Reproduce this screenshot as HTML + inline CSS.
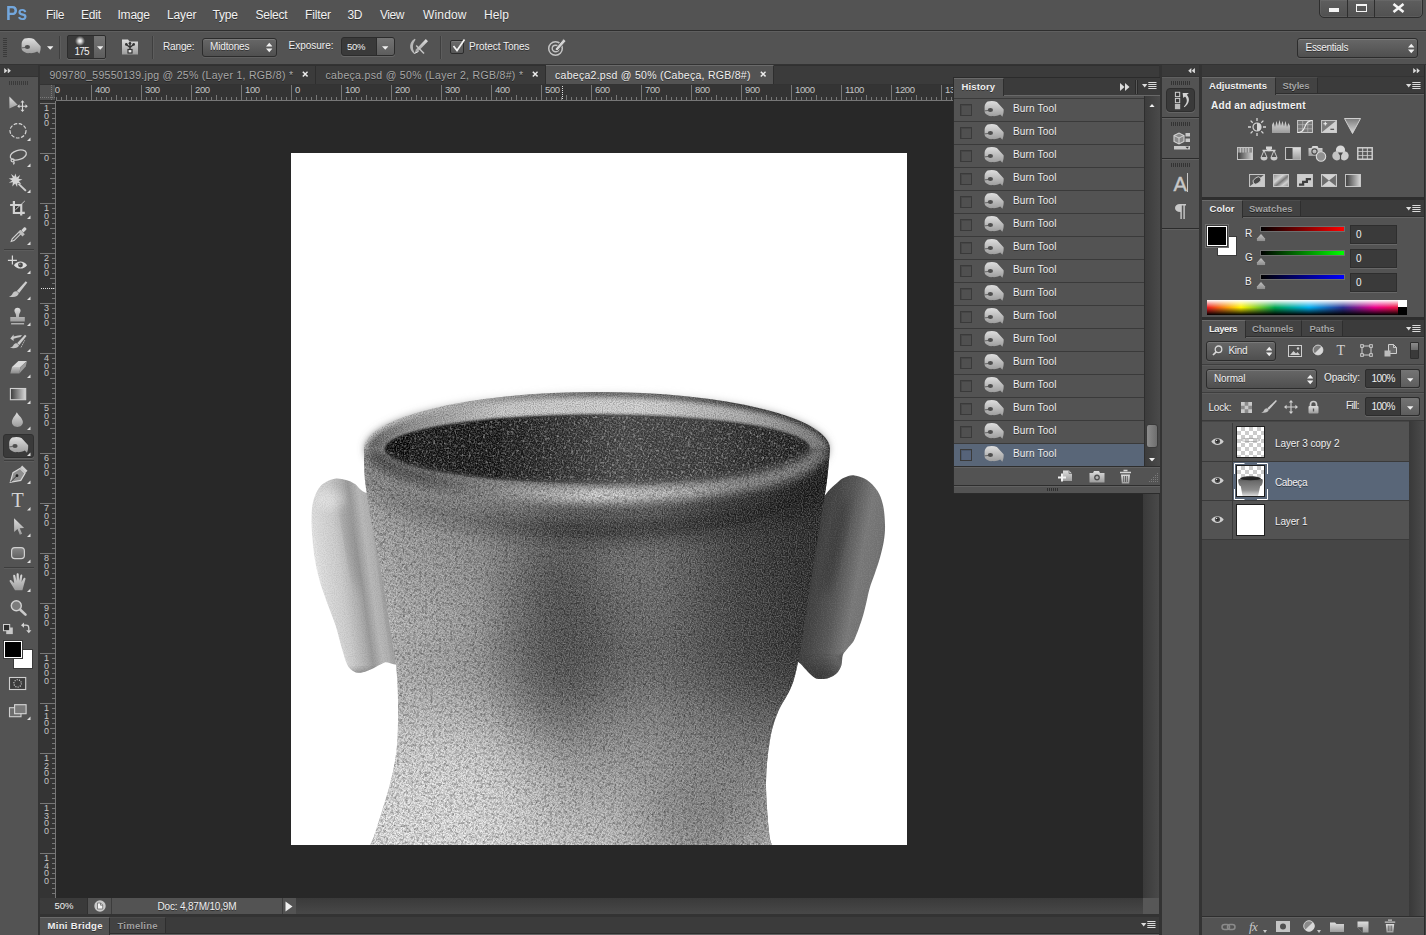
<!DOCTYPE html>
<html lang="en"><head><meta charset="utf-8"><title>Adobe Photoshop CS6 - cabeça2.psd</title>
<style>
html,body{margin:0;padding:0;background:#535353;}
body{width:1426px;height:935px;overflow:hidden;font-family:"Liberation Sans",sans-serif;}
#app{position:relative;width:1426px;height:935px;overflow:hidden;background:#535353;}
#app div,#app span.t,#app svg{position:absolute;box-sizing:border-box;}
span.t{white-space:nowrap;display:block;}

</style></head>
<body>
<div id="app">
<div style="left:0px;top:30px;width:1426px;height:1px;background:#2e2e2e;"></div>
<div style="left:0px;top:31px;width:1426px;height:1px;background:#5f5f5f;"></div>
<div style="left:0px;top:64px;width:1426px;height:1px;background:#333333;"></div>
<div style="left:0px;top:65px;width:38px;height:11px;background:#3a3a3a;"></div>
<div style="left:0px;top:76px;width:38px;height:1px;background:#333333;"></div>
<div style="left:38px;top:65px;width:2px;height:870px;background:#333333;"></div>
<div style="left:40px;top:65px;width:1119px;height:19px;background:#3b3b3b;"></div>
<div style="left:40px;top:84px;width:1119px;height:1px;background:#333333;"></div>
<div style="left:40px;top:85px;width:1104px;height:16px;background:#343434;"></div>
<div style="left:40px;top:101px;width:16px;height:797px;background:#343434;"></div>
<div style="left:40px;top:85px;width:15px;height:15px;background:#4f4f4f;"></div>
<div style="left:55px;top:85px;width:1px;height:16px;background:#2e2e2e;"></div>
<div style="left:40px;top:100px;width:16px;height:1px;background:#2e2e2e;"></div>
<div style="left:56px;top:101px;width:1087px;height:797px;background:#282828;"></div>
<div style="left:1143px;top:85px;width:16px;height:813px;background:linear-gradient(90deg,#3a3a3a,#494949);"></div>
<div style="left:40px;top:898px;width:1119px;height:16px;background:#3a3a3a;"></div>
<div style="left:40px;top:914px;width:1119px;height:3px;background:#333333;"></div>
<div style="left:1159px;top:65px;width:3px;height:870px;background:#333333;"></div>
<div style="left:1199px;top:65px;width:3px;height:870px;background:#333333;"></div>
<div style="left:1162px;top:65px;width:37px;height:11px;background:#3a3a3a;"></div>
<div style="left:1162px;top:76px;width:37px;height:1px;background:#333333;"></div>
<div style="left:1202px;top:65px;width:224px;height:11px;background:#3a3a3a;"></div>
<div style="left:1202px;top:76px;width:224px;height:1px;background:#333333;"></div>
<svg width="0" height="0" style="left:0;top:0"><defs>
<linearGradient id="gIcon" x1="0" y1="0" x2="0" y2="1"><stop offset="0" stop-color="#dedede"/><stop offset="1" stop-color="#9c9c9c"/></linearGradient>
<linearGradient id="gIconD" x1="0" y1="0" x2="0" y2="1"><stop offset="0" stop-color="#c4c4c4"/><stop offset="1" stop-color="#8a8a8a"/></linearGradient>
<symbol id="burn" viewBox="0 0 20 16"><path d="M3.600 .6C6.500-.3 10.200-.2 12.900 1L19.600 8.300C19.900 11 19.200 13.600 18.400 15.800L16.200 13.600C13.600 15 10.600 15.400 8.500 15.100 6.600 15.300 5 15 3.900 14.300 2 13.300.8 12 .6 10.400V5.800C.8 3.600 1.800 1.600 3.600 .6z" fill="url(#gIcon)"/><ellipse cx="6.400" cy="9" rx="2.600" ry="2.100" fill="#4e4e4e"/><path d="M.6 9.900L4.200 9.500" stroke="#5a5a5a" stroke-width=".9"/></symbol>
<symbol id="pmenu" viewBox="0 0 15 8"><path d="M0 2h5.400L2.700 5.600z" fill="#dcdcdc"/><path d="M6.300 .5h8.200M6.300 2.500h8.200M6.300 4.500h8.200M6.300 6.500h8.200" stroke="#dcdcdc" stroke-width="1"/></symbol>
<symbol id="updown" viewBox="0 0 7 11"><path d="M0 4.500L3.500.5 7 4.500zM0 6.500L3.500 10.500 7 6.500z" fill="#f0f0f0"/></symbol>
<symbol id="dn" viewBox="0 0 7 4"><path d="M0 0h7L3.500 4z" fill="#f0f0f0"/></symbol>
</defs></svg>
<span id="t0" class="t" style="left:6px;top:3px;font-size:20px;line-height:20px;height:20px;color:#73a7dd;font-weight:bold;transform:scaleX(.87);transform-origin:0 0;">Ps</span>
<span id="t1" class="t" style="left:46px;top:9px;font-size:12px;line-height:12px;height:12px;color:#f2f2f2;text-shadow:0 1px 0 rgba(0,0,0,.45);letter-spacing:-0.281px;">File</span>
<span id="t2" class="t" style="left:81px;top:9px;font-size:12px;line-height:12px;height:12px;color:#f2f2f2;text-shadow:0 1px 0 rgba(0,0,0,.45);letter-spacing:-0.229px;">Edit</span>
<span id="t3" class="t" style="left:117.5px;top:9px;font-size:12px;line-height:12px;height:12px;color:#f2f2f2;text-shadow:0 1px 0 rgba(0,0,0,.45);letter-spacing:-0.215px;">Image</span>
<span id="t4" class="t" style="left:167px;top:9px;font-size:12px;line-height:12px;height:12px;color:#f2f2f2;text-shadow:0 1px 0 rgba(0,0,0,.45);letter-spacing:-0.133px;">Layer</span>
<span id="t5" class="t" style="left:212.5px;top:9px;font-size:12px;line-height:12px;height:12px;color:#f2f2f2;text-shadow:0 1px 0 rgba(0,0,0,.45);letter-spacing:-0.172px;">Type</span>
<span id="t6" class="t" style="left:255.5px;top:9px;font-size:12px;line-height:12px;height:12px;color:#f2f2f2;text-shadow:0 1px 0 rgba(0,0,0,.45);letter-spacing:-0.272px;">Select</span>
<span id="t7" class="t" style="left:305px;top:9px;font-size:12px;line-height:12px;height:12px;color:#f2f2f2;text-shadow:0 1px 0 rgba(0,0,0,.45);letter-spacing:-0.134px;">Filter</span>
<span id="t8" class="t" style="left:347.5px;top:9px;font-size:12px;line-height:12px;height:12px;color:#f2f2f2;text-shadow:0 1px 0 rgba(0,0,0,.45);letter-spacing:-0.344px;">3D</span>
<span id="t9" class="t" style="left:380px;top:9px;font-size:12px;line-height:12px;height:12px;color:#f2f2f2;text-shadow:0 1px 0 rgba(0,0,0,.45);letter-spacing:-0.432px;">View</span>
<span id="t10" class="t" style="left:423px;top:9px;font-size:12px;line-height:12px;height:12px;color:#f2f2f2;text-shadow:0 1px 0 rgba(0,0,0,.45);letter-spacing:0.163px;">Window</span>
<span id="t11" class="t" style="left:484px;top:9px;font-size:12px;line-height:12px;height:12px;color:#f2f2f2;text-shadow:0 1px 0 rgba(0,0,0,.45);letter-spacing:0.104px;">Help</span>
<div style="left:1319px;top:-1px;width:104px;height:19px;border:1px solid #2e2e2e;border-radius:0 0 5px 5px;background:linear-gradient(#5e5e5e,#515151);box-shadow:inset 0 0 0 1px rgba(255,255,255,.06)"></div>
<div style="left:1347px;top:0px;width:1px;height:17px;background:#2e2e2e;"></div>
<div style="left:1374px;top:0px;width:1px;height:17px;background:#2e2e2e;"></div>
<div style="left:1329px;top:8px;width:10px;height:4px;background:#f4f4f4;"></div>
<div style="left:1356px;top:4px;width:11px;height:8px;border:1.500px solid #f4f4f4;border-top-width:2.500px"></div>
<svg style="left:1392px;top:3px" width="13" height="10" viewBox="0 0 13 10"><path d="M1.500 1L11.500 9M11.500 1L1.500 9" stroke="#f4f4f4" stroke-width="2.600"/></svg>
<div style="left:3px;top:38px;width:4px;height:20px;background:repeating-linear-gradient(#3a3a3a 0 1px,transparent 1px 2px)"></div>
<svg style="left:20.500px;top:38.300px" width="20" height="16"><use href="#burn"/></svg>
<svg style="left:47px;top:45.500px" width="6.500" height="4"><use href="#dn"/></svg>
<div style="left:59px;top:36px;width:1px;height:23px;background:#3f3f3f;"></div>
<div style="left:60px;top:36px;width:1px;height:23px;background:#5d5d5d;"></div>
<div style="left:67px;top:35px;width:39px;height:24px;border:1px solid #2c2c2c;border-radius:2px;background:#3a3a3a;box-shadow:0 1px 0 rgba(255,255,255,.12)"></div>
<div style="left:94px;top:36px;width:11px;height:22px;border-radius:0 1px 1px 0;background:linear-gradient(#747474,#5d5d5d)"></div>
<div style="left:75px;top:36px;width:10px;height:10px;border-radius:50%;background:radial-gradient(circle,#fff 0,#cfcfcf 25%,rgba(120,120,120,.5) 60%,rgba(58,58,58,0) 75%)"></div>
<span id="t12" class="t" style="left:74.5px;top:47px;font-size:10px;line-height:10px;height:10px;color:#f0f0f0;letter-spacing:-0.844px;">175</span>
<svg style="left:96.500px;top:45.500px" width="6.500" height="4"><use href="#dn"/></svg>
<svg style="left:121px;top:37px" width="18" height="19" viewBox="0 0 18 19"><path d="M1 2.500h6l1.500 2H17v13H1z" fill="url(#gIcon)"/><path d="M9 15.500v-5M9 10.500L5.500 7.500M9 10.500l3.500-3M9 10.500V6.500" stroke="#333" stroke-width="1.400" fill="none"/><rect x="7" y="12.500" width="4" height="3.500" fill="#f0f0f0" stroke="#333" stroke-width="1.200"/><circle cx="5.300" cy="7.400" r="1.300" fill="#333"/><circle cx="12.700" cy="7.400" r="1.300" fill="#333"/><circle cx="9" cy="6.200" r="1.300" fill="#333"/></svg>
<div style="left:152px;top:36px;width:1px;height:23px;background:#3f3f3f;"></div>
<div style="left:153px;top:36px;width:1px;height:23px;background:#5d5d5d;"></div>
<span id="t13" class="t" style="left:163px;top:42px;font-size:10px;line-height:10px;height:10px;color:#f0f0f0;text-shadow:0 1px 0 rgba(0,0,0,.45);letter-spacing:-0.150px;">Range:</span>
<div style="left:202px;top:38px;width:75px;height:19px;border:1px solid #2c2c2c;border-radius:3px;background:linear-gradient(#676767,#4f4f4f);box-shadow:inset 0 1px 0 rgba(255,255,255,.13),0 1px 0 rgba(255,255,255,.08)"></div>
<span id="t14" class="t" style="left:210px;top:42px;font-size:10px;line-height:10px;height:10px;color:#f0f0f0;text-shadow:0 1px 0 rgba(0,0,0,.45);letter-spacing:-0.154px;">Midtones</span>
<svg style="left:266px;top:42px" width="6.500" height="11"><use href="#updown"/></svg>
<span id="t15" class="t" style="left:288.5px;top:41px;font-size:10px;line-height:10px;height:10px;color:#f0f0f0;text-shadow:0 1px 0 rgba(0,0,0,.45);letter-spacing:-0.004px;">Exposure:</span>
<div style="left:341px;top:37px;width:54px;height:19px;border:1px solid #2c2c2c;border-radius:3px;background:#3a3a3a;box-shadow:0 1px 0 rgba(255,255,255,.12)"></div>
<div style="left:376px;top:38px;width:18px;height:17px;border-radius:0 2px 2px 0;background:linear-gradient(#747474,#5d5d5d);border-left:1px solid #2c2c2c"></div>
<span id="t16" class="t" style="left:347px;top:42px;font-size:9.5px;line-height:10px;height:10px;color:#f0f0f0;letter-spacing:-0.258px;">50%</span>
<svg style="left:382px;top:45.500px" width="6.500" height="4"><use href="#dn"/></svg>
<svg style="left:408px;top:38px" width="21" height="17" viewBox="0 0 21 17"><path d="M6.800 1.500C1.800 4.500 1.500 11 5.800 14.800 3.600 10.800 3.800 5.500 6.800 1.500z" fill="#b8b8b8" stroke="#b8b8b8" stroke-width="1.300" stroke-linejoin="round"/><path d="M17.800 1l2.200 2.200-9.700 10-4 2.300 1.800-4.300z" fill="url(#gIcon)"/><path d="M8.200 7.500l7.800 8" stroke="#c4c4c4" stroke-width="1.500"/><path d="M10.500 13.500l-4.200 2" stroke="#e8e8e8" stroke-width="1"/></svg>
<div style="left:440px;top:36px;width:1px;height:23px;background:#3f3f3f;"></div>
<div style="left:441px;top:36px;width:1px;height:23px;background:#5d5d5d;"></div>
<div style="left:450px;top:40px;width:14px;height:14px;border:1px solid #2c2c2c;border-radius:2px;background:linear-gradient(#6a6a6a,#565656);box-shadow:inset 0 1px 0 rgba(255,255,255,.1)"></div>
<svg style="left:451px;top:38px" width="15" height="15" viewBox="0 0 15 15"><path d="M2.500 8l3.500 4.500L13.500 1.500" stroke="#f2f2f2" stroke-width="1.700" fill="none"/></svg>
<span id="t17" class="t" style="left:469px;top:42px;font-size:10px;line-height:10px;height:10px;color:#f0f0f0;text-shadow:0 1px 0 rgba(0,0,0,.45);letter-spacing:-0.039px;">Protect Tones</span>
<svg style="left:547px;top:37px" width="20" height="20" viewBox="0 0 20 20"><circle cx="8.500" cy="11.500" r="6.800" stroke="#c4c4c4" stroke-width="1.500" fill="none"/><circle cx="8.500" cy="11.500" r="3.300" stroke="#c4c4c4" stroke-width="1.400" fill="none"/><path d="M7.800 12.200l8.700-10.400 2.600 2.300L10.200 14z" fill="#d4d4d4" stroke="#535353" stroke-width=".9"/></svg>
<div style="left:1297px;top:38px;width:121px;height:20px;border:1px solid #2c2c2c;border-radius:3px;background:linear-gradient(#676767,#4f4f4f);box-shadow:inset 0 1px 0 rgba(255,255,255,.13),0 1px 0 rgba(255,255,255,.08)"></div>
<span id="t18" class="t" style="left:1305.5px;top:43px;font-size:10px;line-height:10px;height:10px;color:#f0f0f0;text-shadow:0 1px 0 rgba(0,0,0,.45);letter-spacing:-0.286px;">Essentials</span>
<svg style="left:1408px;top:42.500px" width="6.500" height="11"><use href="#updown"/></svg>
<svg style="left:4px;top:67.800px" width="7.500" height="5.500" viewBox="0 0 9 7"><path d="M0 0l4 3.500L0 7zM4.500 0l4 3.500-4 3.500z" fill="#dcdcdc"/></svg>
<div style="left:9px;top:81px;width:19px;height:4px;background:repeating-linear-gradient(90deg,#3a3a3a 0 1px,transparent 1px 2px)"></div>
<div style="left:4px;top:249px;width:30px;height:1px;background:#3d3d3d;"></div>
<div style="left:4px;top:250px;width:30px;height:1px;background:#5c5c5c;"></div>
<div style="left:4px;top:460px;width:30px;height:1px;background:#3d3d3d;"></div>
<div style="left:4px;top:461px;width:30px;height:1px;background:#5c5c5c;"></div>
<div style="left:4px;top:567px;width:30px;height:1px;background:#3d3d3d;"></div>
<div style="left:4px;top:568px;width:30px;height:1px;background:#5c5c5c;"></div>
<div style="left:3px;top:434px;width:31px;height:24px;border-radius:3px;background:#3a3a3a;border:1px solid #303030;box-shadow:0 1px 0 rgba(255,255,255,.10)"></div>
<svg style="left:0;top:77px" width="38" height="660" viewBox="0 77 38 660">
<g fill="#e0e0e0"><path d="M30.500 137.5V141H27z"/><path d="M30.500 163.5V167H27z"/><path d="M30.500 189.5V193H27z"/><path d="M30.500 215.5V219H27z"/><path d="M30.500 241.5V245H27z"/><path d="M30.500 270.5V274H27z"/><path d="M30.500 296.5V300H27z"/><path d="M30.500 322.5V326H27z"/><path d="M30.500 348.5V352H27z"/><path d="M30.500 374.5V378H27z"/><path d="M30.500 400.5V404H27z"/><path d="M30.500 426.5V430H27z"/><path d="M30.500 452.5V456H27z"/><path d="M30.500 480.5V484H27z"/><path d="M30.500 507.0V510.5H27z"/><path d="M30.500 533.5V537H27z"/><path d="M30.500 559.5V563H27z"/><path d="M30.500 588.5V592H27z"/><path d="M30.500 716.5V720H27z"/></g>
<!-- move -->
<path d="M9.400 96.600V108.600L17.600 104.700z" fill="url(#gIcon)"/>
<path d="M18.300 106.200h8.400M22.500 101.400v9.600" stroke="#d8d8d8" stroke-width="1.100"/>
<path d="M22.500 100.300l-2 2.300h4zM22.500 112.100l-2-2.300h4zM17.200 106.200l2.300-2v4zM27.800 106.200l-2.300-2v4z" fill="#d8d8d8"/>
<!-- elliptical marquee -->
<ellipse cx="18" cy="130.800" rx="8" ry="7.200" fill="none" stroke="#d8d8d8" stroke-width="1.200" stroke-dasharray="3.600 1.600"/>
<!-- lasso -->
<g fill="none" stroke="#cfcfcf" stroke-width="1.300"><ellipse cx="18.300" cy="155" rx="8.300" ry="4.700" transform="rotate(-17 18.300 155)"/><circle cx="12.600" cy="160.300" r="1.500"/><path d="M13.400 161.600c1.200 1 .9 2.200-.3 2.600"/></g>
<!-- magic wand -->
<path d="M15.400 173.600l1.300 3.800 3.400-2.400-1.600 3.800 4 .6-3.700 1.700 2.500 3-3.800-1.200-.4 4-2-3.500-2.800 3 .600-4.100-4.100.5 3.400-2.400-3.500-2 4.100-.5-1.700-3.800 3.300 2.400z" fill="#d4d4d4"/>
<path d="M18.600 183.900l7.300 7" stroke="#cfcfcf" stroke-width="2"/>
<!-- crop -->
<path d="M13.900 201v11.900h10.900M10.100 205h11.100v10.500" fill="none" stroke="#d2d2d2" stroke-width="2.200"/>
<rect x="15" y="206.100" width="5.100" height="5.700" fill="#3c3c3c"/>
<path d="M24.800 201l-9.400 8.800" stroke="#d2d2d2" stroke-width=".9"/>
<!-- eyedropper -->
<path d="M11.200 241.500l1-2.700 8-8 1.800 1.800-8 8z" fill="#5a5a5a" stroke="#d2d2d2" stroke-width="1.100"/>
<path d="M18.300 232.300l2.300-2.300 4.200 4.200-2.300 2.300z" fill="#bdbdbd"/>
<path d="M21.300 230.300l2.600-2.800c1.200-1.100 3.400 1 2.300 2.300l-2.800 2.700z" fill="#d6d6d6"/>
<!-- spot healing -->
<path d="M12.400 255.500v9M7.900 260.400h9" stroke="#dadada" stroke-width="1.200"/>
<path d="M13.900 265.200c3.500-5 9.700-5 13.200 0-3.500 4.500-9.700 4.500-13.200 0z" fill="#dcdcdc"/>
<circle cx="20.500" cy="265" r="2.400" fill="#484848"/><circle cx="19.800" cy="264.200" r=".8" fill="#999"/>
<!-- brush -->
<path d="M25.700 281.300l1.600 1.300-8.200 10.300-2.300-1.800z" fill="#cdcdcd"/>
<path d="M16.600 291.300l2.200 1.900c-.5 3.300-5 4.800-9.900 3.200 2.500-.5 3-1.600 3.700-3 1-1.800 2.500-2.400 4-2.100z" fill="#c4c4c4"/>
<!-- clone stamp -->
<path d="M17.500 307.800c1.800 0 3.100 1.300 3.100 3 0 1.600-1.300 2.400-1.500 3.900l-.2 2.300h5.900v4.600H10.300V317h5.800l-.2-2.300c-.2-1.500-1.500-2.300-1.500-3.900 0-1.700 1.300-3 3.100-3z" fill="url(#gIcon)"/>
<path d="M11.100 323.800h13" stroke="#cfcfcf" stroke-width="1.100"/>
<!-- history brush -->
<path d="M25 334.800l1.500 1.200-7.200 8.900-2.200-1.700z" fill="#cdcdcd"/>
<path d="M16.900 343.400l2.100 1.800c-.5 2.600-4.400 3.600-9.100 2.600 2.300-.5 2.800-1.400 3.500-2.500.9-1.500 2.200-2.100 3.500-1.900z" fill="#c4c4c4"/>
<path d="M10.300 338.600l3.300-4v1.900c3-.9 6-1.300 8.400-1.500l-1.500 1.900c-2.300.3-4.700.9-6.900 1.800v2.300z" fill="#c9c9c9"/>
<path d="M24.600 340.500l-3.600 7" stroke="#e0e0e0" stroke-width="1" stroke-dasharray="1 1.200"/>
<!-- eraser -->
<path d="M18.400 361H27l-6.500 6H12z" fill="#dadada"/>
<path d="M12 367h8.500l-1.200 6.400h-9z" fill="url(#gIconD)"/>
<path d="M20.500 367l6.500-6-1.300 5.500-6.400 6.900z" fill="#9a9a9a"/>
<!-- gradient -->
<linearGradient id="gGrad" x1="0" y1="0" x2="1" y2="0"><stop offset="0" stop-color="#3a3a3a"/><stop offset="1" stop-color="#d8d8d8"/></linearGradient>
<rect x="10.400" y="388.500" width="15.300" height="11.200" fill="url(#gGrad)" stroke="#d0d0d0" stroke-width="1.100"/>
<!-- blur -->
<path d="M16.800 412.200c1.300 2.800 6.100 6.200 6.100 9.800 0 3-2.400 4.900-5.500 4.900s-5.500-1.900-5.500-4.900c0-3.600 3.900-7 4.900-9.800z" fill="url(#gIcon)"/>
<!-- burn (selected) -->
<use href="#burn" x="8.600" y="437" width="20" height="16"/>
<!-- pen -->
<path d="M10.300 482.300l2.700-9.600 7-4.300 5 5-4.200 7z" fill="#8e8e8e" stroke="#d8d8d8" stroke-width="1.200"/>
<path d="M10.600 482l6-6" stroke="#3a3a3a" stroke-width="1"/><circle cx="17" cy="475.700" r="1.400" fill="#222"/>
<path d="M20.200 467.700l2-2.200 5.300 5.300-2 2.200z" fill="#cfcfcf"/>
<!-- path selection -->
<path d="M14.100 518.300v13.800l3.400-3.200 2.300 5.800 2.300-.9-2.400-5.600 4.400-.3z" fill="url(#gIcon)"/>
<!-- rounded rectangle -->
<linearGradient id="gShape" x1="0" y1="0" x2="0" y2="1"><stop offset="0" stop-color="#868686"/><stop offset="1" stop-color="#626262"/></linearGradient>
<rect x="11.600" y="547.600" width="12.800" height="11" rx="3.300" fill="url(#gShape)" stroke="#d0d0d0" stroke-width="1.200"/>
<!-- hand -->
<path d="M15 590.200l-5.300-8.600c-.6-1.200.8-2.100 1.800-1.100l2.700 2.700-1-7.200c-.2-1.400 1.600-1.700 2-.4l1.300 5.300.1-6.600c0-1.400 2-1.400 2.100 0l.4 6.500 1.300-5.600c.3-1.300 2.100-.9 1.900.4l-.8 6.500 2.100-3.800c.7-1.200 2.300-.4 1.800.9l-3 11z" fill="url(#gIcon)"/>
<!-- zoom -->
<circle cx="16.300" cy="605.700" r="5" fill="#7c7c7c" stroke="#d2d2d2" stroke-width="1.400"/>
<path d="M20.300 609.700l5.200 4.900" stroke="#cacaca" stroke-width="2.600" stroke-linecap="round"/>
<!-- default colors / swap -->
<rect x="6.200" y="627.500" width="6.600" height="6.600" fill="#c8c8c8"/>
<rect x="3.500" y="624.500" width="6.200" height="6.200" fill="#2e2e2e" stroke="#d0d0d0" stroke-width="1"/>
<path d="M23.300 625.200h2.700c1.800 0 2.800 1 2.800 2.800v2.500" fill="none" stroke="#d4d4d4" stroke-width="1.300"/>
<path d="M21 625.200l3-2.600v5.200zM28.800 633.200l-2.600-3h5.200z" fill="#d4d4d4"/>
<!-- fg / bg swatches -->
<rect x="13.500" y="649.500" width="19" height="19" fill="#fff" stroke="#3a3a3a" stroke-width="1"/>
<rect x="3.500" y="640.500" width="19" height="18" fill="#000" stroke="#3a3a3a" stroke-width="1"/>
<rect x="4.500" y="641.500" width="17" height="16" fill="#000" stroke="#fff" stroke-width="1"/>
<!-- quick mask -->
<rect x="9.500" y="677.500" width="16.200" height="12" fill="#3c3c3c" stroke="#cfcfcf" stroke-width="1.100"/>
<circle cx="17.600" cy="683.400" r="3.700" fill="none" stroke="#e6e6e6" stroke-width="1.100" stroke-dasharray="1 1.300"/>
<!-- screen mode -->
<rect x="9.500" y="707.700" width="11.500" height="9" fill="#6e6e6e" stroke="#cfcfcf" stroke-width="1.100"/>
<rect x="14.600" y="704.700" width="11.500" height="9" fill="#7a7a7a" stroke="#d6d6d6" stroke-width="1.100"/>
</svg>
<span id="t19" class="t" style="left:11.5px;top:490px;font-size:20px;line-height:20px;height:20px;color:#d4d4d4;font-family:'Liberation Serif',serif;">T</span>
<div style="left:315px;top:65px;width:1px;height:19px;background:#2e2e2e;"></div>
<div style="left:545px;top:65px;width:1px;height:19px;background:#2e2e2e;"></div>
<div style="left:40px;top:65px;width:1119px;height:1px;background:#303030;"></div>
<div style="left:546px;top:65px;width:228px;height:19px;background:#535353;border-top:1px solid #6a6a6a;border-right:1px solid #2e2e2e"></div>
<span id="t20" class="t" style="left:49.5px;top:70px;font-size:10.5px;line-height:11px;height:11px;color:#a8a8a8;text-shadow:0 1px 0 rgba(0,0,0,.5);letter-spacing:0.283px;">909780_59550139.jpg @ 25% (Layer 1, RGB/8) *</span>
<span id="t21" class="t" style="left:325.5px;top:70px;font-size:10.5px;line-height:11px;height:11px;color:#a8a8a8;text-shadow:0 1px 0 rgba(0,0,0,.5);letter-spacing:0.319px;">cabeça.psd @ 50% (Layer 2, RGB/8#) *</span>
<span id="t22" class="t" style="left:555px;top:70px;font-size:10.5px;line-height:11px;height:11px;color:#f0f0f0;text-shadow:0 1px 0 rgba(0,0,0,.45);letter-spacing:0.277px;">cabeça2.psd @ 50% (Cabeça, RGB/8#)</span>
<svg style="left:301.8px;top:71px" width="6.400" height="6.200" viewBox="0 0 7 7"><path d="M.8.8l5.400 5.400M6.200.8L.8 6.200" stroke="#ececec" stroke-width="1.700"/></svg>
<svg style="left:531.8px;top:71px" width="6.400" height="6.200" viewBox="0 0 7 7"><path d="M.8.8l5.400 5.400M6.200.8L.8 6.200" stroke="#ececec" stroke-width="1.700"/></svg>
<svg style="left:759.8px;top:71px" width="6.400" height="6.200" viewBox="0 0 7 7"><path d="M.8.8l5.400 5.400M6.200.8L.8 6.200" stroke="#ececec" stroke-width="1.700"/></svg>
<svg style="left:0;top:0" width="1160" height="101" viewBox="0 0 1160 101"><path d="M56.5 97V100M61.5 97V100M66.5 95V100M71.5 97V100M76.5 97V100M81.5 97V100M86.5 97V100M91.5 85V100M96.5 97V100M101.5 97V100M106.5 97V100M111.5 97V100M116.5 95V100M121.5 97V100M126.5 97V100M131.5 97V100M136.5 97V100M141.5 85V100M146.5 97V100M151.5 97V100M156.5 97V100M161.5 97V100M166.5 95V100M171.5 97V100M176.5 97V100M181.5 97V100M186.5 97V100M191.5 85V100M196.5 97V100M201.5 97V100M206.5 97V100M211.5 97V100M216.5 95V100M221.5 97V100M226.5 97V100M231.5 97V100M236.5 97V100M241.5 85V100M246.5 97V100M251.5 97V100M256.5 97V100M261.5 97V100M266.5 95V100M271.5 97V100M276.5 97V100M281.5 97V100M286.5 97V100M291.5 85V100M296.5 97V100M301.5 97V100M306.5 97V100M311.5 97V100M316.5 95V100M321.5 97V100M326.5 97V100M331.5 97V100M336.5 97V100M341.5 85V100M346.5 97V100M351.5 97V100M356.5 97V100M361.5 97V100M366.5 95V100M371.5 97V100M376.5 97V100M381.5 97V100M386.5 97V100M391.5 85V100M396.5 97V100M401.5 97V100M406.5 97V100M411.5 97V100M416.5 95V100M421.5 97V100M426.5 97V100M431.5 97V100M436.5 97V100M441.5 85V100M446.5 97V100M451.5 97V100M456.5 97V100M461.5 97V100M466.5 95V100M471.5 97V100M476.5 97V100M481.5 97V100M486.5 97V100M491.5 85V100M496.5 97V100M501.5 97V100M506.5 97V100M511.5 97V100M516.5 95V100M521.5 97V100M526.5 97V100M531.5 97V100M536.5 97V100M541.5 85V100M546.5 97V100M551.5 97V100M556.5 97V100M561.5 97V100M566.5 95V100M571.5 97V100M576.5 97V100M581.5 97V100M586.5 97V100M591.5 85V100M596.5 97V100M601.5 97V100M606.5 97V100M611.5 97V100M616.5 95V100M621.5 97V100M626.5 97V100M631.5 97V100M636.5 97V100M641.5 85V100M646.5 97V100M651.5 97V100M656.5 97V100M661.5 97V100M666.5 95V100M671.5 97V100M676.5 97V100M681.5 97V100M686.5 97V100M691.5 85V100M696.5 97V100M701.5 97V100M706.5 97V100M711.5 97V100M716.5 95V100M721.5 97V100M726.5 97V100M731.5 97V100M736.5 97V100M741.5 85V100M746.5 97V100M751.5 97V100M756.5 97V100M761.5 97V100M766.5 95V100M771.5 97V100M776.5 97V100M781.5 97V100M786.5 97V100M791.5 85V100M796.5 97V100M801.5 97V100M806.5 97V100M811.5 97V100M816.5 95V100M821.5 97V100M826.5 97V100M831.5 97V100M836.5 97V100M841.5 85V100M846.5 97V100M851.5 97V100M856.5 97V100M861.5 97V100M866.5 95V100M871.5 97V100M876.5 97V100M881.5 97V100M886.5 97V100M891.5 85V100M896.5 97V100M901.5 97V100M906.5 97V100M911.5 97V100M916.5 95V100M921.5 97V100M926.5 97V100M931.5 97V100M936.5 97V100M941.5 85V100M946.5 97V100M951.5 97V100M956.5 97V100M961.5 97V100M966.5 95V100M971.5 97V100M976.5 97V100M981.5 97V100M986.5 97V100M991.5 85V100M996.5 97V100M1001.5 97V100M1006.5 97V100M1011.5 97V100M1016.5 95V100M1021.5 97V100M1026.5 97V100M1031.5 97V100M1036.5 97V100M1041.5 85V100M1046.5 97V100M1051.5 97V100M1056.5 97V100M1061.5 97V100M1066.5 95V100M1071.5 97V100M1076.5 97V100M1081.5 97V100M1086.5 97V100M1091.5 85V100M1096.5 97V100M1101.5 97V100M1106.5 97V100M1111.5 97V100M1116.5 95V100M1121.5 97V100M1126.5 97V100M1131.5 97V100M1136.5 97V100M1141.5 85V100" stroke="#777777" stroke-width="1" fill="none" shape-rendering="crispEdges"/><path d="M56 100.500H1143" stroke="#777777" stroke-width="1" shape-rendering="crispEdges"/></svg>
<div style="left:55px;top:85px;width:1088px;height:13px;overflow:hidden">
<span class="t" style="left:-10px;top:0;font-size:9.500px;line-height:9px;letter-spacing:-.35px;color:#c4c4c4">500</span>
<span class="t" style="left:40px;top:0;font-size:9.500px;line-height:9px;letter-spacing:-.35px;color:#c4c4c4">400</span>
<span class="t" style="left:90px;top:0;font-size:9.500px;line-height:9px;letter-spacing:-.35px;color:#c4c4c4">300</span>
<span class="t" style="left:140px;top:0;font-size:9.500px;line-height:9px;letter-spacing:-.35px;color:#c4c4c4">200</span>
<span class="t" style="left:190px;top:0;font-size:9.500px;line-height:9px;letter-spacing:-.35px;color:#c4c4c4">100</span>
<span class="t" style="left:240px;top:0;font-size:9.500px;line-height:9px;letter-spacing:-.35px;color:#c4c4c4">0</span>
<span class="t" style="left:290px;top:0;font-size:9.500px;line-height:9px;letter-spacing:-.35px;color:#c4c4c4">100</span>
<span class="t" style="left:340px;top:0;font-size:9.500px;line-height:9px;letter-spacing:-.35px;color:#c4c4c4">200</span>
<span class="t" style="left:390px;top:0;font-size:9.500px;line-height:9px;letter-spacing:-.35px;color:#c4c4c4">300</span>
<span class="t" style="left:440px;top:0;font-size:9.500px;line-height:9px;letter-spacing:-.35px;color:#c4c4c4">400</span>
<span class="t" style="left:490px;top:0;font-size:9.500px;line-height:9px;letter-spacing:-.35px;color:#c4c4c4">500</span>
<span class="t" style="left:540px;top:0;font-size:9.500px;line-height:9px;letter-spacing:-.35px;color:#c4c4c4">600</span>
<span class="t" style="left:590px;top:0;font-size:9.500px;line-height:9px;letter-spacing:-.35px;color:#c4c4c4">700</span>
<span class="t" style="left:640px;top:0;font-size:9.500px;line-height:9px;letter-spacing:-.35px;color:#c4c4c4">800</span>
<span class="t" style="left:690px;top:0;font-size:9.500px;line-height:9px;letter-spacing:-.35px;color:#c4c4c4">900</span>
<span class="t" style="left:740px;top:0;font-size:9.500px;line-height:9px;letter-spacing:-.35px;color:#c4c4c4">1000</span>
<span class="t" style="left:790px;top:0;font-size:9.500px;line-height:9px;letter-spacing:-.35px;color:#c4c4c4">1100</span>
<span class="t" style="left:840px;top:0;font-size:9.500px;line-height:9px;letter-spacing:-.35px;color:#c4c4c4">1200</span>
<span class="t" style="left:890px;top:0;font-size:9.500px;line-height:9px;letter-spacing:-.35px;color:#c4c4c4">1300</span>
<span class="t" style="left:940px;top:0;font-size:9.500px;line-height:9px;letter-spacing:-.35px;color:#c4c4c4">1400</span>
<span class="t" style="left:990px;top:0;font-size:9.500px;line-height:9px;letter-spacing:-.35px;color:#c4c4c4">1500</span>
<span class="t" style="left:1040px;top:0;font-size:9.500px;line-height:9px;letter-spacing:-.35px;color:#c4c4c4">1600</span>
<span class="t" style="left:1090px;top:0;font-size:9.500px;line-height:9px;letter-spacing:-.35px;color:#c4c4c4">1700</span>
</div>
<svg style="left:0;top:101px" width="56" height="797" viewBox="0 101 56 797"><path d="M40 103.5H55M52 108.5H55M52 113.5H55M52 118.5H55M52 123.5H55M50 128.5H55M52 133.5H55M52 138.5H55M52 143.5H55M52 148.5H55M40 153.5H55M52 158.5H55M52 163.5H55M52 168.5H55M52 173.5H55M50 178.5H55M52 183.5H55M52 188.5H55M52 193.5H55M52 198.5H55M40 203.5H55M52 208.5H55M52 213.5H55M52 218.5H55M52 223.5H55M50 228.5H55M52 233.5H55M52 238.5H55M52 243.5H55M52 248.5H55M40 253.5H55M52 258.5H55M52 263.5H55M52 268.5H55M52 273.5H55M50 278.5H55M52 283.5H55M52 288.5H55M52 293.5H55M52 298.5H55M40 303.5H55M52 308.5H55M52 313.5H55M52 318.5H55M52 323.5H55M50 328.5H55M52 333.5H55M52 338.5H55M52 343.5H55M52 348.5H55M40 353.5H55M52 358.5H55M52 363.5H55M52 368.5H55M52 373.5H55M50 378.5H55M52 383.5H55M52 388.5H55M52 393.5H55M52 398.5H55M40 403.5H55M52 408.5H55M52 413.5H55M52 418.5H55M52 423.5H55M50 428.5H55M52 433.5H55M52 438.5H55M52 443.5H55M52 448.5H55M40 453.5H55M52 458.5H55M52 463.5H55M52 468.5H55M52 473.5H55M50 478.5H55M52 483.5H55M52 488.5H55M52 493.5H55M52 498.5H55M40 503.5H55M52 508.5H55M52 513.5H55M52 518.5H55M52 523.5H55M50 528.5H55M52 533.5H55M52 538.5H55M52 543.5H55M52 548.5H55M40 553.5H55M52 558.5H55M52 563.5H55M52 568.5H55M52 573.5H55M50 578.5H55M52 583.5H55M52 588.5H55M52 593.5H55M52 598.5H55M40 603.5H55M52 608.5H55M52 613.5H55M52 618.5H55M52 623.5H55M50 628.5H55M52 633.5H55M52 638.5H55M52 643.5H55M52 648.5H55M40 653.5H55M52 658.5H55M52 663.5H55M52 668.5H55M52 673.5H55M50 678.5H55M52 683.5H55M52 688.5H55M52 693.5H55M52 698.5H55M40 703.5H55M52 708.5H55M52 713.5H55M52 718.5H55M52 723.5H55M50 728.5H55M52 733.5H55M52 738.5H55M52 743.5H55M52 748.5H55M40 753.5H55M52 758.5H55M52 763.5H55M52 768.5H55M52 773.5H55M50 778.5H55M52 783.5H55M52 788.5H55M52 793.5H55M52 798.5H55M40 803.5H55M52 808.5H55M52 813.5H55M52 818.5H55M52 823.5H55M50 828.5H55M52 833.5H55M52 838.5H55M52 843.5H55M52 848.5H55M40 853.5H55M52 858.5H55M52 863.5H55M52 868.5H55M52 873.5H55M50 878.5H55M52 883.5H55M52 888.5H55M52 893.5H55" stroke="#777777" stroke-width="1" fill="none" shape-rendering="crispEdges"/><path d="M55.500 101V898" stroke="#777777" stroke-width="1" shape-rendering="crispEdges"/></svg>
<span class="t" style="left:43px;top:105px;width:7px;font-size:9px;line-height:7.500px;color:#c4c4c4;white-space:normal;word-break:break-all;text-align:center">100</span>
<span class="t" style="left:43px;top:155px;width:7px;font-size:9px;line-height:7.500px;color:#c4c4c4;white-space:normal;word-break:break-all;text-align:center">0</span>
<span class="t" style="left:43px;top:205px;width:7px;font-size:9px;line-height:7.500px;color:#c4c4c4;white-space:normal;word-break:break-all;text-align:center">100</span>
<span class="t" style="left:43px;top:255px;width:7px;font-size:9px;line-height:7.500px;color:#c4c4c4;white-space:normal;word-break:break-all;text-align:center">200</span>
<span class="t" style="left:43px;top:305px;width:7px;font-size:9px;line-height:7.500px;color:#c4c4c4;white-space:normal;word-break:break-all;text-align:center">300</span>
<span class="t" style="left:43px;top:355px;width:7px;font-size:9px;line-height:7.500px;color:#c4c4c4;white-space:normal;word-break:break-all;text-align:center">400</span>
<span class="t" style="left:43px;top:405px;width:7px;font-size:9px;line-height:7.500px;color:#c4c4c4;white-space:normal;word-break:break-all;text-align:center">500</span>
<span class="t" style="left:43px;top:455px;width:7px;font-size:9px;line-height:7.500px;color:#c4c4c4;white-space:normal;word-break:break-all;text-align:center">600</span>
<span class="t" style="left:43px;top:505px;width:7px;font-size:9px;line-height:7.500px;color:#c4c4c4;white-space:normal;word-break:break-all;text-align:center">700</span>
<span class="t" style="left:43px;top:555px;width:7px;font-size:9px;line-height:7.500px;color:#c4c4c4;white-space:normal;word-break:break-all;text-align:center">800</span>
<span class="t" style="left:43px;top:605px;width:7px;font-size:9px;line-height:7.500px;color:#c4c4c4;white-space:normal;word-break:break-all;text-align:center">900</span>
<span class="t" style="left:43px;top:655px;width:7px;font-size:9px;line-height:7.500px;color:#c4c4c4;white-space:normal;word-break:break-all;text-align:center">1000</span>
<span class="t" style="left:43px;top:705px;width:7px;font-size:9px;line-height:7.500px;color:#c4c4c4;white-space:normal;word-break:break-all;text-align:center">1100</span>
<span class="t" style="left:43px;top:755px;width:7px;font-size:9px;line-height:7.500px;color:#c4c4c4;white-space:normal;word-break:break-all;text-align:center">1200</span>
<span class="t" style="left:43px;top:805px;width:7px;font-size:9px;line-height:7.500px;color:#c4c4c4;white-space:normal;word-break:break-all;text-align:center">1300</span>
<span class="t" style="left:43px;top:855px;width:7px;font-size:9px;line-height:7.500px;color:#c4c4c4;white-space:normal;word-break:break-all;text-align:center">1400</span>
<div style="left:40px;top:97px;width:15px;height:1px;background:repeating-linear-gradient(90deg,#7a7a7a 0 1px,transparent 1px 2px)"></div>
<div style="left:51px;top:85px;width:1px;height:15px;background:repeating-linear-gradient(#7a7a7a 0 1px,transparent 1px 2px)"></div>
<div style="left:562px;top:86px;width:1px;height:14px;background:repeating-linear-gradient(#e0e0e0 0 1px,transparent 1px 2px)"></div>
<div style="left:41px;top:288px;width:14px;height:1px;background:repeating-linear-gradient(90deg,#e0e0e0 0 1px,transparent 1px 2px)"></div>
<div style="left:291px;top:153px;width:616px;height:692px;background:#ffffff;"></div>
<div style="left:88px;top:898px;width:208px;height:16px;background:#535353;"></div>
<div style="left:111px;top:898px;width:1px;height:16px;background:#3c3c3c;"></div>
<div style="left:87px;top:898px;width:1px;height:16px;background:#303030;"></div>
<span id="t23" class="t" style="left:54.5px;top:901px;font-size:9.5px;line-height:10px;height:10px;color:#f0f0f0;letter-spacing:-0.008px;">50%</span>
<svg style="left:94px;top:900px" width="12" height="12" viewBox="0 0 12 12"><circle cx="6" cy="6" r="5.700" fill="#c9c9c9"/><path d="M3.500 3h3.200l2 2v4H3.500z" fill="#f4f4f4" stroke="#6a6a6a" stroke-width=".8"/><path d="M6.500 3v2.200h2.200" fill="none" stroke="#6a6a6a" stroke-width=".8"/></svg>
<span id="t24" class="t" style="left:157.5px;top:902px;font-size:10px;line-height:10px;height:10px;color:#f0f0f0;text-shadow:0 1px 0 rgba(0,0,0,.45);letter-spacing:-0.181px;">Doc: 4,87M/10,9M</span>
<div style="left:282px;top:898px;width:1px;height:16px;background:#3c3c3c;"></div>
<svg style="left:285px;top:901px" width="8" height="11" viewBox="0 0 8 11"><path d="M.5.5l7 5-7 5z" fill="#f0f0f0"/></svg>
<div style="left:296px;top:898px;width:847px;height:16px;background:linear-gradient(#3a3a3a,#484848);"></div>
<div style="left:1143px;top:898px;width:16px;height:16px;background:#575757;"></div>
<div style="left:40px;top:917px;width:1119px;height:16px;background:#3b3b3b;"></div>
<div style="left:40px;top:933px;width:1119px;height:1px;background:#2e2e2e;"></div>
<div style="left:40px;top:934px;width:1119px;height:1px;background:#656565;"></div>
<div style="left:40px;top:917px;width:70px;height:18px;background:#535353;border-top:1px solid #6a6a6a;border-right:1px solid #2e2e2e"></div>
<div style="left:110px;top:917px;width:56px;height:16px;background:#424242;border-top:1px solid #4c4c4c;border-right:1px solid #2e2e2e"></div>
<span id="t25" class="t" style="left:47.5px;top:921px;font-size:9.5px;line-height:10px;height:10px;color:#f0f0f0;font-weight:bold;text-shadow:0 1px 0 rgba(0,0,0,.45);letter-spacing:0.327px;">Mini Bridge</span>
<span id="t26" class="t" style="left:117.5px;top:921px;font-size:9.5px;line-height:10px;height:10px;color:#a0a0a0;font-weight:bold;text-shadow:0 1px 0 rgba(0,0,0,.5);letter-spacing:0.232px;">Timeline</span>
<svg style="left:1141px;top:921px" width="15" height="8"><use href="#pmenu"/></svg>
<div style="left:953px;top:77px;width:1px;height:416px;background:#2b2b2b;"></div>
<div style="left:954px;top:77px;width:206px;height:1px;background:#2b2b2b;"></div>
<div style="left:954px;top:78px;width:206px;height:415px;background:#535353;"></div>
<div style="left:954px;top:78px;width:206px;height:17px;background:#3b3b3b;"></div>
<div style="left:954px;top:78px;width:50px;height:18px;background:#535353;border-top:1px solid #6a6a6a;border-right:1px solid #2e2e2e"></div>
<div style="left:1004px;top:95px;width:156px;height:1px;background:#686868;"></div>
<span id="t27" class="t" style="left:961.5px;top:82px;font-size:9.5px;line-height:10px;height:10px;color:#f0f0f0;font-weight:bold;text-shadow:0 1px 0 rgba(0,0,0,.45);letter-spacing:0.128px;">History</span>
<svg style="left:1120px;top:82.500px" width="10" height="8" viewBox="0 0 10 8"><path d="M0 0l4.500 4L0 8zM5 0l4.500 4L5 8z" fill="#dcdcdc"/></svg>
<div style="left:1135px;top:80px;width:1px;height:14px;background:#2a2a2a;"></div>
<div style="left:1136px;top:80px;width:1px;height:14px;background:#595959;"></div>
<div style="left:1137px;top:80px;width:1px;height:14px;background:#2a2a2a;"></div>
<svg style="left:1142px;top:82px" width="15" height="8"><use href="#pmenu"/></svg>
<div style="left:954px;top:98px;width:190px;height:1px;background:#3a3a3a;"></div>
<div style="left:954px;top:99px;width:190px;height:22px;background:#535353;"></div>
<div style="left:954px;top:121px;width:190px;height:1px;background:#3a3a3a;"></div>
<div style="left:960px;top:104px;width:12px;height:12px;border:1px solid #3a3a3a;background:#505050;box-shadow:inset 1px 1px 0 rgba(0,0,0,.12)"></div>
<svg style="left:983.500px;top:101px" width="20" height="16"><use href="#burn"/></svg>
<span id="t28" class="t" style="left:1013px;top:104px;font-size:10px;line-height:10px;height:10px;color:#f0f0f0;text-shadow:0 1px 0 rgba(0,0,0,.45);letter-spacing:0.178px;">Burn Tool</span>
<div style="left:954px;top:122px;width:190px;height:22px;background:#535353;"></div>
<div style="left:954px;top:144px;width:190px;height:1px;background:#3a3a3a;"></div>
<div style="left:960px;top:127px;width:12px;height:12px;border:1px solid #3a3a3a;background:#505050;box-shadow:inset 1px 1px 0 rgba(0,0,0,.12)"></div>
<svg style="left:983.500px;top:124px" width="20" height="16"><use href="#burn"/></svg>
<span id="t29" class="t" style="left:1013px;top:127px;font-size:10px;line-height:10px;height:10px;color:#f0f0f0;text-shadow:0 1px 0 rgba(0,0,0,.45);letter-spacing:0.178px;">Burn Tool</span>
<div style="left:954px;top:145px;width:190px;height:22px;background:#535353;"></div>
<div style="left:954px;top:167px;width:190px;height:1px;background:#3a3a3a;"></div>
<div style="left:960px;top:150px;width:12px;height:12px;border:1px solid #3a3a3a;background:#505050;box-shadow:inset 1px 1px 0 rgba(0,0,0,.12)"></div>
<svg style="left:983.500px;top:147px" width="20" height="16"><use href="#burn"/></svg>
<span id="t30" class="t" style="left:1013px;top:150px;font-size:10px;line-height:10px;height:10px;color:#f0f0f0;text-shadow:0 1px 0 rgba(0,0,0,.45);letter-spacing:0.178px;">Burn Tool</span>
<div style="left:954px;top:168px;width:190px;height:22px;background:#535353;"></div>
<div style="left:954px;top:190px;width:190px;height:1px;background:#3a3a3a;"></div>
<div style="left:960px;top:173px;width:12px;height:12px;border:1px solid #3a3a3a;background:#505050;box-shadow:inset 1px 1px 0 rgba(0,0,0,.12)"></div>
<svg style="left:983.500px;top:170px" width="20" height="16"><use href="#burn"/></svg>
<span id="t31" class="t" style="left:1013px;top:173px;font-size:10px;line-height:10px;height:10px;color:#f0f0f0;text-shadow:0 1px 0 rgba(0,0,0,.45);letter-spacing:0.178px;">Burn Tool</span>
<div style="left:954px;top:191px;width:190px;height:22px;background:#535353;"></div>
<div style="left:954px;top:213px;width:190px;height:1px;background:#3a3a3a;"></div>
<div style="left:960px;top:196px;width:12px;height:12px;border:1px solid #3a3a3a;background:#505050;box-shadow:inset 1px 1px 0 rgba(0,0,0,.12)"></div>
<svg style="left:983.500px;top:193px" width="20" height="16"><use href="#burn"/></svg>
<span id="t32" class="t" style="left:1013px;top:196px;font-size:10px;line-height:10px;height:10px;color:#f0f0f0;text-shadow:0 1px 0 rgba(0,0,0,.45);letter-spacing:0.178px;">Burn Tool</span>
<div style="left:954px;top:214px;width:190px;height:22px;background:#535353;"></div>
<div style="left:954px;top:236px;width:190px;height:1px;background:#3a3a3a;"></div>
<div style="left:960px;top:219px;width:12px;height:12px;border:1px solid #3a3a3a;background:#505050;box-shadow:inset 1px 1px 0 rgba(0,0,0,.12)"></div>
<svg style="left:983.500px;top:216px" width="20" height="16"><use href="#burn"/></svg>
<span id="t33" class="t" style="left:1013px;top:219px;font-size:10px;line-height:10px;height:10px;color:#f0f0f0;text-shadow:0 1px 0 rgba(0,0,0,.45);letter-spacing:0.178px;">Burn Tool</span>
<div style="left:954px;top:237px;width:190px;height:22px;background:#535353;"></div>
<div style="left:954px;top:259px;width:190px;height:1px;background:#3a3a3a;"></div>
<div style="left:960px;top:242px;width:12px;height:12px;border:1px solid #3a3a3a;background:#505050;box-shadow:inset 1px 1px 0 rgba(0,0,0,.12)"></div>
<svg style="left:983.500px;top:239px" width="20" height="16"><use href="#burn"/></svg>
<span id="t34" class="t" style="left:1013px;top:242px;font-size:10px;line-height:10px;height:10px;color:#f0f0f0;text-shadow:0 1px 0 rgba(0,0,0,.45);letter-spacing:0.178px;">Burn Tool</span>
<div style="left:954px;top:260px;width:190px;height:22px;background:#535353;"></div>
<div style="left:954px;top:282px;width:190px;height:1px;background:#3a3a3a;"></div>
<div style="left:960px;top:265px;width:12px;height:12px;border:1px solid #3a3a3a;background:#505050;box-shadow:inset 1px 1px 0 rgba(0,0,0,.12)"></div>
<svg style="left:983.500px;top:262px" width="20" height="16"><use href="#burn"/></svg>
<span id="t35" class="t" style="left:1013px;top:265px;font-size:10px;line-height:10px;height:10px;color:#f0f0f0;text-shadow:0 1px 0 rgba(0,0,0,.45);letter-spacing:0.178px;">Burn Tool</span>
<div style="left:954px;top:283px;width:190px;height:22px;background:#535353;"></div>
<div style="left:954px;top:305px;width:190px;height:1px;background:#3a3a3a;"></div>
<div style="left:960px;top:288px;width:12px;height:12px;border:1px solid #3a3a3a;background:#505050;box-shadow:inset 1px 1px 0 rgba(0,0,0,.12)"></div>
<svg style="left:983.500px;top:285px" width="20" height="16"><use href="#burn"/></svg>
<span id="t36" class="t" style="left:1013px;top:288px;font-size:10px;line-height:10px;height:10px;color:#f0f0f0;text-shadow:0 1px 0 rgba(0,0,0,.45);letter-spacing:0.178px;">Burn Tool</span>
<div style="left:954px;top:306px;width:190px;height:22px;background:#535353;"></div>
<div style="left:954px;top:328px;width:190px;height:1px;background:#3a3a3a;"></div>
<div style="left:960px;top:311px;width:12px;height:12px;border:1px solid #3a3a3a;background:#505050;box-shadow:inset 1px 1px 0 rgba(0,0,0,.12)"></div>
<svg style="left:983.500px;top:308px" width="20" height="16"><use href="#burn"/></svg>
<span id="t37" class="t" style="left:1013px;top:311px;font-size:10px;line-height:10px;height:10px;color:#f0f0f0;text-shadow:0 1px 0 rgba(0,0,0,.45);letter-spacing:0.178px;">Burn Tool</span>
<div style="left:954px;top:329px;width:190px;height:22px;background:#535353;"></div>
<div style="left:954px;top:351px;width:190px;height:1px;background:#3a3a3a;"></div>
<div style="left:960px;top:334px;width:12px;height:12px;border:1px solid #3a3a3a;background:#505050;box-shadow:inset 1px 1px 0 rgba(0,0,0,.12)"></div>
<svg style="left:983.500px;top:331px" width="20" height="16"><use href="#burn"/></svg>
<span id="t38" class="t" style="left:1013px;top:334px;font-size:10px;line-height:10px;height:10px;color:#f0f0f0;text-shadow:0 1px 0 rgba(0,0,0,.45);letter-spacing:0.178px;">Burn Tool</span>
<div style="left:954px;top:352px;width:190px;height:22px;background:#535353;"></div>
<div style="left:954px;top:374px;width:190px;height:1px;background:#3a3a3a;"></div>
<div style="left:960px;top:357px;width:12px;height:12px;border:1px solid #3a3a3a;background:#505050;box-shadow:inset 1px 1px 0 rgba(0,0,0,.12)"></div>
<svg style="left:983.500px;top:354px" width="20" height="16"><use href="#burn"/></svg>
<span id="t39" class="t" style="left:1013px;top:357px;font-size:10px;line-height:10px;height:10px;color:#f0f0f0;text-shadow:0 1px 0 rgba(0,0,0,.45);letter-spacing:0.178px;">Burn Tool</span>
<div style="left:954px;top:375px;width:190px;height:22px;background:#535353;"></div>
<div style="left:954px;top:397px;width:190px;height:1px;background:#3a3a3a;"></div>
<div style="left:960px;top:380px;width:12px;height:12px;border:1px solid #3a3a3a;background:#505050;box-shadow:inset 1px 1px 0 rgba(0,0,0,.12)"></div>
<svg style="left:983.500px;top:377px" width="20" height="16"><use href="#burn"/></svg>
<span id="t40" class="t" style="left:1013px;top:380px;font-size:10px;line-height:10px;height:10px;color:#f0f0f0;text-shadow:0 1px 0 rgba(0,0,0,.45);letter-spacing:0.178px;">Burn Tool</span>
<div style="left:954px;top:398px;width:190px;height:22px;background:#535353;"></div>
<div style="left:954px;top:420px;width:190px;height:1px;background:#3a3a3a;"></div>
<div style="left:960px;top:403px;width:12px;height:12px;border:1px solid #3a3a3a;background:#505050;box-shadow:inset 1px 1px 0 rgba(0,0,0,.12)"></div>
<svg style="left:983.500px;top:400px" width="20" height="16"><use href="#burn"/></svg>
<span id="t41" class="t" style="left:1013px;top:403px;font-size:10px;line-height:10px;height:10px;color:#f0f0f0;text-shadow:0 1px 0 rgba(0,0,0,.45);letter-spacing:0.178px;">Burn Tool</span>
<div style="left:954px;top:421px;width:190px;height:22px;background:#535353;"></div>
<div style="left:954px;top:443px;width:190px;height:1px;background:#3a3a3a;"></div>
<div style="left:960px;top:426px;width:12px;height:12px;border:1px solid #3a3a3a;background:#505050;box-shadow:inset 1px 1px 0 rgba(0,0,0,.12)"></div>
<svg style="left:983.500px;top:423px" width="20" height="16"><use href="#burn"/></svg>
<span id="t42" class="t" style="left:1013px;top:426px;font-size:10px;line-height:10px;height:10px;color:#f0f0f0;text-shadow:0 1px 0 rgba(0,0,0,.45);letter-spacing:0.178px;">Burn Tool</span>
<div style="left:954px;top:444px;width:190px;height:22px;background:#596678;"></div>
<div style="left:954px;top:466px;width:190px;height:1px;background:#3a3a3a;"></div>
<div style="left:960px;top:449px;width:12px;height:12px;border:1px solid #3a3a3a;background:#56637a;box-shadow:inset 1px 1px 0 rgba(0,0,0,.12)"></div>
<svg style="left:983.500px;top:446px" width="20" height="16"><use href="#burn"/></svg>
<span id="t43" class="t" style="left:1013px;top:449px;font-size:10px;line-height:10px;height:10px;color:#f0f0f0;text-shadow:0 1px 0 rgba(0,0,0,.45);letter-spacing:0.178px;">Burn Tool</span>
<div style="left:1144px;top:96px;width:16px;height:370px;background:linear-gradient(90deg,#3b3b3b,#4a4a4a);"></div>
<div style="left:1144px;top:96px;width:1px;height:370px;background:#2e2e2e;"></div>
<svg style="left:1149px;top:103.500px" width="6" height="3.500" viewBox="0 0 7 4"><path d="M0 4h7L3.500 0z" fill="#f0f0f0"/></svg>
<svg style="left:1149px;top:458px" width="6" height="3.500"><use href="#dn"/></svg>
<div style="left:1146px;top:424px;width:12px;height:24px;border-radius:3px;background:linear-gradient(90deg,#8c8c8c,#6e6e6e);border:1px solid #3a3a3a"></div>
<div style="left:954px;top:466px;width:206px;height:1px;background:#2e2e2e;"></div>
<div style="left:954px;top:467px;width:206px;height:18px;background:#535353;"></div>
<div style="left:954px;top:467px;width:206px;height:1px;background:#616161;"></div>
<div style="left:954px;top:485px;width:206px;height:1px;background:#2e2e2e;"></div>
<div style="left:954px;top:486px;width:206px;height:7px;background:#535353;"></div>
<div style="left:954px;top:486px;width:206px;height:1px;background:#616161;"></div>
<div style="left:954px;top:493px;width:206px;height:1px;background:#2b2b2b;"></div>
<div style="left:1047px;top:488px;width:11px;height:3px;background:repeating-linear-gradient(90deg,#303030 0 1px,transparent 1px 2px)"></div>
<svg style="left:1057px;top:469px" width="16" height="15" viewBox="0 0 16 15"><path d="M6 1.500h6l3 3V12H6z" fill="url(#gIcon)"/><path d="M12 1.500v3h3" fill="none" stroke="#6a6a6a" stroke-width=".8"/><path d="M1 8.500h8M5 4.500v8" stroke="#f0f0f0" stroke-width="2"/></svg>
<svg style="left:1089px;top:470px" width="16" height="13" viewBox="0 0 16 13"><path d="M.5 3h3.500l1-2h5l1 2h4.500v9.500H.5z" fill="url(#gIcon)"/><circle cx="8" cy="7.500" r="2.900" fill="#505050"/><circle cx="8" cy="7.500" r="1.500" fill="#b4b4b4"/></svg>
<svg style="left:1119px;top:469px" width="13" height="15" viewBox="0 0 13 15"><path d="M4.500 1.500h4M1 3.500h11" stroke="#d6d6d6" stroke-width="1.400"/><path d="M2 5.500h9l-.8 9H2.800z" fill="url(#gIcon)"/><path d="M4.700 7v6M6.500 7v6M8.300 7v6" stroke="#555" stroke-width=".9"/></svg>
<svg style="left:1148px;top:473px" width="11" height="11" viewBox="0 0 11 11"><g fill="#7a7a7a"><rect x="9" y="0" width="1" height="1"/><rect x="7" y="2" width="1" height="1"/><rect x="9" y="2" width="1" height="1"/><rect x="5" y="4" width="1" height="1"/><rect x="7" y="4" width="1" height="1"/><rect x="9" y="4" width="1" height="1"/><rect x="3" y="6" width="1" height="1"/><rect x="5" y="6" width="1" height="1"/><rect x="7" y="6" width="1" height="1"/><rect x="9" y="6" width="1" height="1"/><rect x="1" y="8" width="1" height="1"/><rect x="3" y="8" width="1" height="1"/><rect x="5" y="8" width="1" height="1"/><rect x="7" y="8" width="1" height="1"/><rect x="9" y="8" width="1" height="1"/></g></svg>
<svg style="left:1188px;top:67.800px" width="7.500" height="5.500" viewBox="0 0 9 7"><path d="M4 0L0 3.500 4 7zM8.500 0l-4 3.500 4 3.500z" fill="#dcdcdc"/></svg>
<div style="left:1162px;top:77px;width:37px;height:858px;background:#535353;"></div>
<div style="left:1162px;top:117px;width:37px;height:1px;background:#2b2b2b;"></div>
<div style="left:1162px;top:118px;width:37px;height:1px;background:#606060;"></div>
<div style="left:1162px;top:158px;width:37px;height:1px;background:#2b2b2b;"></div>
<div style="left:1162px;top:159px;width:37px;height:1px;background:#606060;"></div>
<div style="left:1162px;top:228px;width:37px;height:1px;background:#2b2b2b;"></div>
<div style="left:1162px;top:229px;width:37px;height:1px;background:#606060;"></div>
<div style="left:1162px;top:77px;width:37px;height:1px;background:#606060;"></div>
<div style="left:1171px;top:81px;width:19px;height:4px;background:repeating-linear-gradient(90deg,#333 0 1px,transparent 1px 2px)"></div>
<div style="left:1171px;top:122px;width:19px;height:4px;background:repeating-linear-gradient(90deg,#333 0 1px,transparent 1px 2px)"></div>
<div style="left:1171px;top:163px;width:19px;height:4px;background:repeating-linear-gradient(90deg,#333 0 1px,transparent 1px 2px)"></div>
<div style="left:1166px;top:88px;width:29px;height:24px;border-radius:4px;background:#3a3a3a;border:1px solid #2e2e2e;box-shadow:0 1px 0 rgba(255,255,255,.1)"></div>
<svg style="left:1173px;top:91px" width="18" height="19" viewBox="0 0 18 19"><rect x="2.400" y="1.300" width="4.300" height="4.300" fill="#3a3a3a" stroke="#d0d0d0" stroke-width="1"/><rect x="2.400" y="7.400" width="4.300" height="4.300" fill="#3a3a3a" stroke="#d0d0d0" stroke-width="1"/><rect x="1.900" y="13" width="5.300" height="5.200" fill="#bcbcbc"/><path d="M9.600 2.100H15.900L10.300 7.100z" fill="#d4d4d4"/><path d="M13.300 3.600C17.500 7 16.500 12.600 11.500 16.300L10.800 15.500C14.500 12 14.800 8 11.700 5.200z" fill="#d0d0d0"/></svg>
<svg style="left:1173px;top:131px" width="18" height="19" viewBox="0 0 18 19"><path d="M1 4.500l5-2.500 5 2.500v6l-5 2.500-5-2.500z" fill="#8a8a8a" stroke="#d4d4d4" stroke-width="1.100"/><path d="M1 4.500l5 2.500 5-2.500M6 7v6" fill="none" stroke="#d4d4d4" stroke-width="1"/><rect x="12.500" y="2" width="4.500" height="3.500" fill="#c8c8c8"/><rect x="12.500" y="7.500" width="4.500" height="3.500" fill="#c8c8c8"/><rect x="1" y="15" width="16" height="3.500" fill="#c8c8c8"/><path d="M12.500 15.800h3.500l-1.750 2z" fill="#3a3a3a"/></svg>
<span id="t44" class="t" style="left:1173.5px;top:173.5px;font-size:20px;line-height:20px;height:20px;color:#c8c8c8;-webkit-text-stroke:.45px #c8c8c8;">A</span>
<div style="left:1187px;top:173px;width:1px;height:19px;background:#c8c8c8;"></div>
<svg style="left:1174px;top:204px" width="13" height="15" viewBox="0 0 13 15"><path d="M6 0h6v1.500h-1.200V15H9.400V1.500H7.800V15H6.400V8C2.800 8 1 6.300 1 4s1.800-4 5-4z" fill="#c8c8c8"/></svg>
<svg style="left:1412.700px;top:67.800px" width="7.500" height="5.500" viewBox="0 0 9 7"><path d="M0 0l4 3.500L0 7zM4.500 0l4 3.500-4 3.500z" fill="#dcdcdc"/></svg>
<div style="left:1202px;top:77px;width:224px;height:120px;background:#535353;"></div>
<div style="left:1202px;top:77px;width:224px;height:17px;background:#3b3b3b;"></div>
<div style="left:1202px;top:93px;width:224px;height:1px;background:#2e2e2e;"></div>
<div style="left:1202px;top:94px;width:222px;height:1px;background:#656565;"></div>
<div style="left:1202px;top:77px;width:74px;height:18px;background:#535353;border-top:1px solid #6a6a6a;border-right:1px solid #2e2e2e"></div>
<span id="t45" class="t" style="left:1209px;top:81px;font-size:9.5px;line-height:10px;height:10px;color:#f0f0f0;font-weight:bold;text-shadow:0 1px 0 rgba(0,0,0,.45);letter-spacing:0.045px;">Adjustments</span>
<div style="left:1276px;top:77px;width:42px;height:16px;background:#424242;border-top:1px solid #4c4c4c;border-right:1px solid #2e2e2e"></div>
<span id="t46" class="t" style="left:1282.5px;top:81px;font-size:9.5px;line-height:10px;height:10px;color:#a4a4a4;font-weight:bold;text-shadow:0 1px 0 rgba(0,0,0,.5);letter-spacing:-0.200px;">Styles</span>
<svg style="left:1406px;top:82px" width="15" height="8"><use href="#pmenu"/></svg>
<div style="left:1202px;top:197px;width:224px;height:3px;background:#2e2e2e;"></div>
<span id="t47" class="t" style="left:1211px;top:101px;font-size:10px;line-height:10px;height:10px;color:#f4f4f4;font-weight:bold;text-shadow:0 1px 0 rgba(0,0,0,.45);letter-spacing:0.280px;">Add an adjustment</span>
<svg style="left:1247.5px;top:117.5px" width="18" height="18" viewBox="0 0 18 18"><circle cx="9" cy="9" r="4" fill="none" stroke="#d6d6d6" stroke-width="1.200"/><path d="M9 5a4 4 0 0 1 0 8z" fill="#d6d6d6"/><path d="M9 0v3M9 15v3M0 9h3M15 9h3M2.600 2.600l2.100 2.100M13.300 13.300l2.100 2.100M2.600 15.400l2.100-2.100M13.300 4.700l2.100-2.100" stroke="#d6d6d6" stroke-width="1.300"/></svg>
<svg style="left:1272.2px;top:120.0px" width="18" height="13" viewBox="0 0 18 13"><path d="M0 13V5l1.500-3 1.500 5 1.500-6 1.500 5L7.500 0 9 6l1.500-5L12 6.500 13.500 1 15 7l1.500-4L18 6v7z" fill="url(#gIcon)"/></svg>
<svg style="left:1297.0px;top:119.7px" width="16" height="13" viewBox="0 0 17 14"><rect x=".5" y=".5" width="16" height="13" fill="#787878" stroke="#cfcfcf" stroke-width="1"/><path d="M.5 5h16M.5 9.500h16M6 .5v13M11.500 .5v13" stroke="#bdbdbd" stroke-width=".7"/><path d="M.5 13.500c6 0 7-4 8-6.500s2-6 8-6.500" fill="none" stroke="#f0f0f0" stroke-width="1.200"/></svg>
<svg style="left:1321.0px;top:119.7px" width="16" height="13" viewBox="0 0 17 14"><rect x=".5" y=".5" width="16" height="13" fill="#7a7a7a" stroke="#cfcfcf" stroke-width="1"/><path d="M.5 13.500L16.500 .5V13.500z" fill="#d0d0d0"/><path d="M2.500 4h4M4.500 2v4" stroke="#f0f0f0" stroke-width="1.100"/><path d="M10 10h4" stroke="#444" stroke-width="1.200"/></svg>
<svg style="left:1344.3px;top:118.0px" width="17" height="16" viewBox="0 0 17 16"><linearGradient id="gV" x1="0" y1="0" x2="0" y2="1"><stop offset="0" stop-color="#7a7a7a"/><stop offset="1" stop-color="#dcdcdc"/></linearGradient><path d="M.5 .5h16L8.500 15.500z" fill="url(#gV)" stroke="#cfcfcf" stroke-width="1"/></svg>
<svg style="left:1236.9px;top:146.9px" width="16" height="13" viewBox="0 0 17 14"><linearGradient id="gHS" x1="0" y1="0" x2="1" y2="0"><stop offset="0" stop-color="#3c3c3c"/><stop offset="1" stop-color="#d0d0d0"/></linearGradient><rect x=".5" y=".5" width="16" height="13" fill="url(#gHS)" stroke="#cfcfcf" stroke-width="1"/><path d="M1 1h15v5H1z" fill="#8a8a8a"/><path d="M3.500 1v5M6.500 1v5M9.500 1v5M12.500 1v5" stroke="#c8c8c8" stroke-width="1.200"/></svg>
<svg style="left:1259.6px;top:144.5px" width="18" height="16" viewBox="0 0 18 16"><path d="M9 2v4M2.500 5.500h13" stroke="#d4d4d4" stroke-width="1.300"/><path d="M6 1.500h6v2.500L9 6.500 6 4z" fill="#d4d4d4"/><path d="M4 5.500L1 12.500h6zM14 5.500L11 12.500h6z" fill="none" stroke="#d4d4d4" stroke-width=".9"/><path d="M.5 12.500h7c0 2-1.500 3-3.500 3s-3.500-1-3.500-3zM10.500 12.500h7c0 2-1.500 3-3.500 3s-3.500-1-3.500-3z" fill="#c9c9c9"/></svg>
<svg style="left:1284.8px;top:146.9px" width="16" height="13" viewBox="0 0 17 14"><rect x=".5" y=".5" width="16" height="13" fill="#484848" stroke="#cfcfcf" stroke-width="1"/><path d="M8 1h8.500v12.500H8z" fill="url(#gIcon)"/></svg>
<svg style="left:1307.5px;top:144.5px" width="19" height="17" viewBox="0 0 19 17"><path d="M.5 3h3l1-2h5l1 2h4v8H.5z" fill="url(#gIcon)"/><circle cx="6.500" cy="6.500" r="2.600" fill="none" stroke="#4a4a4a" stroke-width="1.100"/><circle cx="13" cy="11.500" r="4.700" fill="#909090" stroke="#dadada" stroke-width="1.100"/></svg>
<svg style="left:1332.2px;top:145.0px" width="17" height="16" viewBox="0 0 17 16"><circle cx="8.500" cy="5" r="4.600" fill="#d8d8d8"/><circle cx="4.900" cy="10.800" r="4.600" fill="#c4c4c4"/><circle cx="12.100" cy="10.800" r="4.600" fill="#cecece"/><path d="M6 7.500h5l-2.500 4z" fill="#4a4a4a"/><path d="M8.500 10.500v4" stroke="#4a4a4a" stroke-width="1.200"/></svg>
<svg style="left:1356.9px;top:146.9px" width="16" height="13" viewBox="0 0 17 14"><rect x=".5" y=".5" width="16" height="13" fill="#d0d0d0" stroke="#cfcfcf" stroke-width="1"/><path d="M1.500 1.500h4v3h-4zM6.500 1.500h4v3h-4zM11.500 1.500h4v3h-4zM1.500 5.500h4v3h-4zM6.500 5.500h4v3h-4zM11.500 5.500h4v3h-4zM1.500 9.500h4v3h-4zM6.500 9.500h4v3h-4zM11.500 9.500h4v3h-4z" fill="#5a5a5a"/></svg>
<svg style="left:1249.0px;top:174.0px" width="16" height="13" viewBox="0 0 17 14"><rect x=".5" y=".5" width="16" height="13" fill="#5a5a5a" stroke="#cfcfcf" stroke-width="1"/><path d="M.5 13.500L16.500 .5V13.500z" fill="#cacaca"/><ellipse cx="8.500" cy="7" rx="4.800" ry="3.100" transform="rotate(-38 8.500 7)" fill="#484848" stroke="#e0e0e0" stroke-width=".8"/></svg>
<svg style="left:1273.0px;top:174.0px" width="16" height="13" viewBox="0 0 17 14"><linearGradient id="gP" x1="0" y1="0" x2="1" y2="1"><stop offset="0" stop-color="#8a8a8a"/><stop offset=".35" stop-color="#d4d4d4"/><stop offset=".55" stop-color="#7a7a7a"/><stop offset=".75" stop-color="#d0d0d0"/><stop offset="1" stop-color="#8a8a8a"/></linearGradient><rect x=".5" y=".5" width="16" height="13" fill="url(#gP)" stroke="#cfcfcf" stroke-width="1"/></svg>
<svg style="left:1297.0px;top:174.0px" width="16" height="13" viewBox="0 0 17 14"><rect x=".5" y=".5" width="16" height="13" fill="#cdcdcd" stroke="#cfcfcf" stroke-width="1"/><path d="M2 11.500h4.500V8.500h4V5.500h4.500" fill="none" stroke="#3e3e3e" stroke-width="2.400"/></svg>
<svg style="left:1321.0px;top:174.0px" width="16" height="13" viewBox="0 0 17 14"><rect x=".5" y=".5" width="16" height="13" fill="#d2d2d2" stroke="#cfcfcf" stroke-width="1"/><path d="M1 1l7.500 6L1 13zM16 1L8.500 7 16 13z" fill="#6e6e6e"/></svg>
<svg style="left:1344.8px;top:174.0px" width="16" height="13" viewBox="0 0 17 14"><rect x=".5" y=".5" width="16" height="13" fill="url(#gGrad)" stroke="#cfcfcf" stroke-width="1"/></svg>
<div style="left:1202px;top:200px;width:224px;height:117px;background:#535353;"></div>
<div style="left:1202px;top:200px;width:224px;height:17px;background:#3b3b3b;"></div>
<div style="left:1202px;top:216px;width:224px;height:1px;background:#2e2e2e;"></div>
<div style="left:1202px;top:217px;width:222px;height:1px;background:#656565;"></div>
<div style="left:1202px;top:200px;width:41px;height:18px;background:#535353;border-top:1px solid #6a6a6a;border-right:1px solid #2e2e2e"></div>
<span id="t48" class="t" style="left:1209.5px;top:204px;font-size:9.5px;line-height:10px;height:10px;color:#f0f0f0;font-weight:bold;text-shadow:0 1px 0 rgba(0,0,0,.45);letter-spacing:0.047px;">Color</span>
<div style="left:1243px;top:200px;width:58px;height:16px;background:#424242;border-top:1px solid #4c4c4c;border-right:1px solid #2e2e2e"></div>
<span id="t49" class="t" style="left:1249px;top:204px;font-size:9.5px;line-height:10px;height:10px;color:#a4a4a4;font-weight:bold;text-shadow:0 1px 0 rgba(0,0,0,.5);letter-spacing:-0.047px;">Swatches</span>
<svg style="left:1406px;top:205px" width="15" height="8"><use href="#pmenu"/></svg>
<div style="left:1202px;top:317px;width:224px;height:3px;background:#2e2e2e;"></div>
<div style="left:1217px;top:236px;width:20px;height:20px;background:#fff;border:1px solid #3a3a3a"></div>
<div style="left:1206px;top:225px;width:22px;height:22px;background:#000;border:1px solid #3a3a3a;box-shadow:inset 0 0 0 1px #fff,inset 0 0 0 2px #000"></div>
<div style="left:1205px;top:224px;width:24px;height:24px;border:1px solid #6e6e6e"></div>
<span id="t50" class="t" style="left:1245px;top:229px;font-size:10px;line-height:10px;height:10px;color:#f0f0f0;text-shadow:0 1px 0 rgba(0,0,0,.45);">R</span>
<div style="left:1260px;top:226px;width:85px;height:6px;background:linear-gradient(90deg,#000,#f00);border:1px solid #6e6e6e;box-sizing:border-box"></div>
<svg style="left:1255.500px;top:232.5px" width="10" height="9" viewBox="0 0 10 9"><path d="M5 .5L9.500 5.500V8.500H.5V5.500z" fill="url(#gIconD)" stroke="#444" stroke-width=".6"/></svg>
<div style="left:1350px;top:225px;width:47px;height:19px;background:#3a3a3a;border:1px solid #2e2e2e;box-shadow:0 1px 0 rgba(255,255,255,.12)"></div>
<span id="t51" class="t" style="left:1356px;top:230px;font-size:10px;line-height:10px;height:10px;color:#f0f0f0;">0</span>
<span id="t52" class="t" style="left:1245px;top:253px;font-size:10px;line-height:10px;height:10px;color:#f0f0f0;text-shadow:0 1px 0 rgba(0,0,0,.45);">G</span>
<div style="left:1260px;top:250px;width:85px;height:6px;background:linear-gradient(90deg,#000,#0f0);border:1px solid #6e6e6e;box-sizing:border-box"></div>
<svg style="left:1255.500px;top:256.5px" width="10" height="9" viewBox="0 0 10 9"><path d="M5 .5L9.500 5.500V8.500H.5V5.500z" fill="url(#gIconD)" stroke="#444" stroke-width=".6"/></svg>
<div style="left:1350px;top:249px;width:47px;height:19px;background:#3a3a3a;border:1px solid #2e2e2e;box-shadow:0 1px 0 rgba(255,255,255,.12)"></div>
<span id="t53" class="t" style="left:1356px;top:254px;font-size:10px;line-height:10px;height:10px;color:#f0f0f0;">0</span>
<span id="t54" class="t" style="left:1245px;top:277px;font-size:10px;line-height:10px;height:10px;color:#f0f0f0;text-shadow:0 1px 0 rgba(0,0,0,.45);">B</span>
<div style="left:1260px;top:274px;width:85px;height:6px;background:linear-gradient(90deg,#000,#00f);border:1px solid #6e6e6e;box-sizing:border-box"></div>
<svg style="left:1255.500px;top:280.5px" width="10" height="9" viewBox="0 0 10 9"><path d="M5 .5L9.500 5.500V8.500H.5V5.500z" fill="url(#gIconD)" stroke="#444" stroke-width=".6"/></svg>
<div style="left:1350px;top:273px;width:47px;height:19px;background:#3a3a3a;border:1px solid #2e2e2e;box-shadow:0 1px 0 rgba(255,255,255,.12)"></div>
<span id="t55" class="t" style="left:1356px;top:278px;font-size:10px;line-height:10px;height:10px;color:#f0f0f0;">0</span>
<div style="left:1207px;top:300px;width:200px;height:15px;background:linear-gradient(rgba(255,255,255,1) 0,rgba(255,255,255,0) 50%,rgba(0,0,0,0) 50%,rgba(0,0,0,1) 100%),linear-gradient(90deg,#ed1c24 0,#fff200 17%,#00a651 34%,#00aeef 51%,#2e3192 68%,#ec008c 84%,#ed1c24 100%)"></div>
<div style="left:1398px;top:300px;width:9px;height:7px;background:#fff;"></div>
<div style="left:1398px;top:307px;width:9px;height:8px;background:#000;"></div>
<div style="left:1202px;top:320px;width:224px;height:615px;background:#535353;"></div>
<div style="left:1202px;top:320px;width:224px;height:17px;background:#3b3b3b;"></div>
<div style="left:1202px;top:336px;width:224px;height:1px;background:#2e2e2e;"></div>
<div style="left:1202px;top:337px;width:222px;height:1px;background:#656565;"></div>
<div style="left:1202px;top:320px;width:44px;height:18px;background:#535353;border-top:1px solid #6a6a6a;border-right:1px solid #2e2e2e"></div>
<span id="t56" class="t" style="left:1209px;top:324px;font-size:9.5px;line-height:10px;height:10px;color:#f0f0f0;font-weight:bold;text-shadow:0 1px 0 rgba(0,0,0,.45);letter-spacing:-0.428px;">Layers</span>
<div style="left:1246px;top:320px;width:56px;height:16px;background:#424242;border-top:1px solid #4c4c4c;border-right:1px solid #2e2e2e"></div>
<span id="t57" class="t" style="left:1252px;top:324px;font-size:9.5px;line-height:10px;height:10px;color:#a4a4a4;font-weight:bold;text-shadow:0 1px 0 rgba(0,0,0,.5);letter-spacing:-0.181px;">Channels</span>
<div style="left:1302px;top:320px;width:41px;height:16px;background:#424242;border-top:1px solid #4c4c4c;border-right:1px solid #2e2e2e"></div>
<span id="t58" class="t" style="left:1309.5px;top:324px;font-size:9.5px;line-height:10px;height:10px;color:#a4a4a4;font-weight:bold;text-shadow:0 1px 0 rgba(0,0,0,.5);letter-spacing:-0.219px;">Paths</span>
<svg style="left:1406px;top:325px" width="15" height="8"><use href="#pmenu"/></svg>
<div style="left:1202px;top:935px;width:224px;height:3px;background:#2e2e2e;"></div>
<div style="left:1206px;top:341px;width:70px;height:20px;border:1px solid #2c2c2c;border-radius:3px;background:linear-gradient(#676767,#4f4f4f);box-shadow:inset 0 1px 0 rgba(255,255,255,.13),0 1px 0 rgba(255,255,255,.08)"></div>
<svg style="left:1212px;top:345px" width="11" height="11" viewBox="0 0 11 11"><circle cx="6.500" cy="4.300" r="3.300" fill="none" stroke="#d8d8d8" stroke-width="1.300"/><path d="M4.200 6.800L1 10" stroke="#d8d8d8" stroke-width="1.700"/></svg>
<span id="t59" class="t" style="left:1228.5px;top:346px;font-size:10px;line-height:10px;height:10px;color:#f0f0f0;text-shadow:0 1px 0 rgba(0,0,0,.45);letter-spacing:-0.339px;">Kind</span>
<svg style="left:1265.500px;top:346px" width="6.500" height="11"><use href="#updown"/></svg>
<svg style="left:1287.5px;top:344.5px" width="14" height="12" viewBox="0 0 14 12"><rect x=".5" y=".5" width="13" height="11" fill="#505050" stroke="#cfcfcf" stroke-width="1"/><path d="M2 10l3.500-4 2.500 2.500 1.500-1.500L12 10z" fill="#cfcfcf"/><circle cx="10" cy="3.500" r="1.200" fill="#cfcfcf"/></svg>
<svg style="left:1312.0px;top:344.3px" width="12" height="12" viewBox="0 0 12 12"><circle cx="6" cy="6" r="4.900" fill="#7a7a7a" stroke="#cfcfcf" stroke-width="1"/><path d="M9.500 2.500A4.900 4.900 0 0 1 2.500 9.500z" fill="#d8d8d8"/></svg>
<span id="t60" class="t" style="left:1336.5px;top:344px;font-size:14px;line-height:14px;height:14px;color:#d0d0d0;font-family:'Liberation Serif',serif;">T</span>
<svg style="left:1360.0px;top:344.0px" width="13" height="13" viewBox="0 0 13 13"><rect x="2" y="2" width="9" height="9" fill="none" stroke="#cfcfcf" stroke-width="1"/><g fill="#535353" stroke="#d8d8d8" stroke-width=".9"><rect x=".7" y=".7" width="2.600" height="2.600"/><rect x="9.700" y=".7" width="2.600" height="2.600"/><rect x=".7" y="9.700" width="2.600" height="2.600"/><rect x="9.700" y="9.700" width="2.600" height="2.600"/></g></svg>
<svg style="left:1384.0px;top:344.0px" width="13" height="13" viewBox="0 0 13 13"><path d="M4.500 .5h5l3 3v6h-8z" fill="#6a6a6a" stroke="#cfcfcf" stroke-width="1"/><path d="M9.500 .5v3h3" fill="none" stroke="#cfcfcf" stroke-width=".9"/><rect x=".5" y="6.500" width="6" height="6" fill="#bdbdbd"/></svg>
<div style="left:1410px;top:342px;width:9px;height:17px;background:#3a3a3a;border:1px solid #2e2e2e;border-radius:1px"></div>
<div style="left:1411px;top:343px;width:7px;height:7px;background:linear-gradient(#8c8c8c,#6a6a6a)"></div>
<div style="left:1202px;top:364px;width:222px;height:1px;background:#3e3e3e;"></div>
<div style="left:1202px;top:365px;width:222px;height:1px;background:#5c5c5c;"></div>
<div style="left:1206px;top:369px;width:111px;height:20px;border:1px solid #2c2c2c;border-radius:3px;background:linear-gradient(#676767,#4f4f4f);box-shadow:inset 0 1px 0 rgba(255,255,255,.13),0 1px 0 rgba(255,255,255,.08)"></div>
<span id="t61" class="t" style="left:1214px;top:374px;font-size:10px;line-height:10px;height:10px;color:#f0f0f0;text-shadow:0 1px 0 rgba(0,0,0,.45);letter-spacing:-0.147px;">Normal</span>
<svg style="left:1306.500px;top:374px" width="6.500" height="11"><use href="#updown"/></svg>
<span id="t62" class="t" style="left:1324px;top:373px;font-size:10px;line-height:10px;height:10px;color:#f0f0f0;text-shadow:0 1px 0 rgba(0,0,0,.45);letter-spacing:-0.098px;">Opacity:</span>
<div style="left:1365px;top:369px;width:55px;height:19px;border:1px solid #2c2c2c;border-radius:2px;background:#3a3a3a;box-shadow:0 1px 0 rgba(255,255,255,.12)"></div>
<div style="left:1400px;top:370px;width:19px;height:17px;border-radius:0 2px 2px 0;background:linear-gradient(#747474,#5d5d5d);border-left:1px solid #2c2c2c"></div>
<span id="t63" class="t" style="left:1371.5px;top:374px;font-size:10px;line-height:10px;height:10px;color:#f0f0f0;letter-spacing:-0.526px;">100%</span>
<svg style="left:1407px;top:377.5px" width="6.500" height="4"><use href="#dn"/></svg>
<div style="left:1365px;top:397px;width:55px;height:19px;border:1px solid #2c2c2c;border-radius:2px;background:#3a3a3a;box-shadow:0 1px 0 rgba(255,255,255,.12)"></div>
<div style="left:1400px;top:398px;width:19px;height:17px;border-radius:0 2px 2px 0;background:linear-gradient(#747474,#5d5d5d);border-left:1px solid #2c2c2c"></div>
<span id="t64" class="t" style="left:1371.5px;top:402px;font-size:10px;line-height:10px;height:10px;color:#f0f0f0;letter-spacing:-0.526px;">100%</span>
<svg style="left:1407px;top:405.5px" width="6.500" height="4"><use href="#dn"/></svg>
<div style="left:1202px;top:392px;width:222px;height:1px;background:#3e3e3e;"></div>
<div style="left:1202px;top:393px;width:222px;height:1px;background:#5c5c5c;"></div>
<span id="t65" class="t" style="left:1208.5px;top:403px;font-size:10px;line-height:10px;height:10px;color:#f0f0f0;text-shadow:0 1px 0 rgba(0,0,0,.45);letter-spacing:-0.227px;">Lock:</span>
<svg style="left:1241.0px;top:402.0px" width="11" height="11" viewBox="0 0 11 11"><rect width="11" height="11" fill="#8a8a8a"/><path d="M0 0h3.700v3.700H0zM7.300 0H11v3.700H7.300zM3.700 3.700h3.600v3.600H3.700zM0 7.300h3.700V11H0zM7.300 7.300H11V11H7.300z" fill="#c9c9c9"/></svg>
<svg style="left:1261.0px;top:400.0px" width="16" height="13" viewBox="0 0 17 14"><path d="M16 0l1 1-8.500 9.500-1.800-1.500z" fill="#cdcdcd"/><path d="M6.300 8.800l2 1.700c-.5 2.500-4 4-8.300 3 2-.5 2.500-1.300 3-2.300.800-1.500 2-2.400 3.300-2.400z" fill="#c4c4c4"/></svg>
<svg style="left:1283.5px;top:399.6px" width="14" height="14" viewBox="0 0 14 14"><path d="M7 1v12M1 7h12" stroke="#d0d0d0" stroke-width="1.100"/><path d="M7 0L4.800 2.600h4.400zM7 14l-2.200-2.600h4.400zM0 7l2.600-2.200v4.400zM14 7l-2.600-2.200v4.400z" fill="#d0d0d0"/></svg>
<svg style="left:1307.5px;top:399.5px" width="11" height="14" viewBox="0 0 11 14"><path d="M2.500 6.500V4.500a3 3 0 0 1 6 0v2" fill="none" stroke="#cdcdcd" stroke-width="1.700"/><rect x=".5" y="6" width="10" height="7.500" rx="1" fill="url(#gIcon)"/><path d="M5.500 8.500v3" stroke="#555" stroke-width="1.300"/></svg>
<span id="t66" class="t" style="left:1346px;top:401px;font-size:10px;line-height:10px;height:10px;color:#f0f0f0;text-shadow:0 1px 0 rgba(0,0,0,.45);letter-spacing:-0.516px;">Fill:</span>
<div style="left:1202px;top:420px;width:222px;height:1px;background:#3a3a3a;"></div>
<div style="left:1202px;top:421px;width:207px;height:495px;background:#464646;"></div>
<div style="left:1409px;top:421px;width:15px;height:495px;background:linear-gradient(90deg,#393939,#4b4b4b);"></div>
<div style="left:1202px;top:422px;width:207px;height:39px;background:#535353;"></div>
<div style="left:1202px;top:461px;width:207px;height:1px;background:#3a3a3a;"></div>
<div style="left:1232px;top:423px;width:1px;height:38px;background:#3a3a3a;"></div>
<svg style="left:1211px;top:437px" width="13" height="9" viewBox="0 0 13 9"><path d="M.3 4.500C3 0 10 0 12.700 4.500 10 9 3 9 .3 4.500z" fill="#cfcfcf"/><circle cx="6.500" cy="4.300" r="2.600" fill="#4a4a4a"/><circle cx="6.500" cy="4.300" r="1.100" fill="#222"/><circle cx="5.600" cy="3.400" r=".7" fill="#ddd"/></svg>
<span id="t67" class="t" style="left:1275px;top:439px;font-size:10px;line-height:10px;height:10px;color:#f0f0f0;text-shadow:0 1px 0 rgba(0,0,0,.45);letter-spacing:-0.085px;">Layer 3 copy 2</span>
<div style="left:1202px;top:462px;width:207px;height:38px;background:#535353;"></div>
<div style="left:1233px;top:462px;width:176px;height:38px;background:#596678;"></div>
<div style="left:1202px;top:500px;width:207px;height:1px;background:#3a3a3a;"></div>
<div style="left:1232px;top:462px;width:1px;height:38px;background:#3a3a3a;"></div>
<svg style="left:1211px;top:476px" width="13" height="9" viewBox="0 0 13 9"><path d="M.3 4.500C3 0 10 0 12.700 4.500 10 9 3 9 .3 4.500z" fill="#cfcfcf"/><circle cx="6.500" cy="4.300" r="2.600" fill="#4a4a4a"/><circle cx="6.500" cy="4.300" r="1.100" fill="#222"/><circle cx="5.600" cy="3.400" r=".7" fill="#ddd"/></svg>
<span id="t68" class="t" style="left:1275px;top:478px;font-size:10px;line-height:10px;height:10px;color:#f0f0f0;text-shadow:0 1px 0 rgba(0,0,0,.45);letter-spacing:-0.394px;">Cabeça</span>
<div style="left:1202px;top:501px;width:207px;height:38px;background:#535353;"></div>
<div style="left:1202px;top:539px;width:207px;height:1px;background:#3a3a3a;"></div>
<div style="left:1232px;top:501px;width:1px;height:38px;background:#3a3a3a;"></div>
<svg style="left:1211px;top:515px" width="13" height="9" viewBox="0 0 13 9"><path d="M.3 4.500C3 0 10 0 12.700 4.500 10 9 3 9 .3 4.500z" fill="#cfcfcf"/><circle cx="6.500" cy="4.300" r="2.600" fill="#4a4a4a"/><circle cx="6.500" cy="4.300" r="1.100" fill="#222"/><circle cx="5.600" cy="3.400" r=".7" fill="#ddd"/></svg>
<span id="t69" class="t" style="left:1275px;top:517px;font-size:10px;line-height:10px;height:10px;color:#f0f0f0;text-shadow:0 1px 0 rgba(0,0,0,.45);letter-spacing:-0.143px;">Layer 1</span>
<div style="left:1236px;top:426px;width:29px;height:32px;border:1px solid #1e1e1e;background-color:#fff;background-image:linear-gradient(45deg,#ccc 25%,transparent 25%,transparent 75%,#ccc 75%),linear-gradient(45deg,#ccc 25%,transparent 25%,transparent 75%,#ccc 75%);background-size:8px 8px;background-position:0 0,4px 4px;"></div>
<svg style="left:1240px;top:437px" width="21" height="6" viewBox="0 0 21 6"><ellipse cx="10.500" cy="3" rx="9.500" ry="1.600" fill="none" stroke="#9a9a9a" stroke-width=".7"/></svg>
<div style="left:1236px;top:465px;width:29px;height:32px;border:1px solid #1e1e1e;background-color:#fff;background-image:linear-gradient(45deg,#ccc 25%,transparent 25%,transparent 75%,#ccc 75%),linear-gradient(45deg,#ccc 25%,transparent 25%,transparent 75%,#ccc 75%);background-size:8px 8px;background-position:0 0,4px 4px;"></div>
<svg style="left:1237px;top:466px" width="27" height="30" viewBox="0 0 27 30"><linearGradient id="gTh" x1="0" y1="0" x2="0" y2="1"><stop offset="0" stop-color="#2c2c2c"/><stop offset=".25" stop-color="#6a6a6a"/><stop offset=".7" stop-color="#8c8c8c"/><stop offset="1" stop-color="#dcdcdc"/></linearGradient><path d="M0 11h27v19H0z" fill="#fff"/><path d="M1.200 15c0-2 1.200-2.500 2-1.500V12c3-2.400 17-2.400 20.600 0v1.500c.8-1 2-.5 2 1.500 0 2.500-1 5-2.600 5.300L21 30H5.500L3.800 20.300C2.200 20 1.200 17.500 1.200 15z" fill="url(#gTh)"/><ellipse cx="13.500" cy="12.600" rx="9.800" ry="1.700" fill="#222"/></svg>
<svg style="left:1234px;top:463px" width="34" height="37" viewBox="0 0 34 37"><path d="M.5 11V.5h10M23 .5h10.500V11M33.500 26v10.500H23M10.500 36.500H.5V26" fill="none" stroke="#fff" stroke-width="1"/></svg>
<div style="left:1236px;top:504px;width:29px;height:32px;border:1px solid #1e1e1e;background:#fff"></div>
<div style="left:1202px;top:916px;width:224px;height:1px;background:#2e2e2e;"></div>
<div style="left:1202px;top:917px;width:224px;height:18px;background:#535353;"></div>
<div style="left:1202px;top:917px;width:224px;height:1px;background:#606060;"></div>
<svg style="left:1220.5px;top:922.5px" width="15" height="8" viewBox="0 0 15 8"><rect x="1" y="1.500" width="7.500" height="5" rx="2.500" fill="none" stroke="#8a8a8a" stroke-width="1.500"/><rect x="6.500" y="1.500" width="7.500" height="5" rx="2.500" fill="none" stroke="#8a8a8a" stroke-width="1.500"/></svg>
<span id="t70" class="t" style="left:1249px;top:920px;font-size:13px;line-height:13px;height:13px;color:#c8c8c8;font-style:italic;font-family:'Liberation Serif',serif;letter-spacing:-.5px;">fx</span>
<svg style="left:1263px;top:930px" width="4" height="3" viewBox="0 0 4 3"><path d="M0 0h4L2 3z" fill="#c8c8c8"/></svg>
<svg style="left:1275.5px;top:921.0px" width="14" height="11" viewBox="0 0 14 11"><rect width="14" height="11" fill="#c4c4c4"/><circle cx="7" cy="5.500" r="3" fill="#505050"/></svg>
<svg style="left:1303.0px;top:919.5px" width="12" height="12" viewBox="0 0 12 12"><circle cx="6" cy="6" r="5.300" fill="#8a8a8a" stroke="#cfcfcf" stroke-width="1"/><path d="M9.800 2.200A5.300 5.300 0 0 1 2.200 9.800z" fill="#d8d8d8"/></svg>
<svg style="left:1317px;top:930px" width="4" height="3" viewBox="0 0 4 3"><path d="M0 0h4L2 3z" fill="#c8c8c8"/></svg>
<svg style="left:1329.5px;top:920.5px" width="14" height="11" viewBox="0 0 14 11"><path d="M0 1.500h5l1.500 1.500H14V11H0z" fill="url(#gIcon)"/></svg>
<svg style="left:1357.0px;top:920.5px" width="12" height="12" viewBox="0 0 12 12"><path d="M.5 .5h11v11H5.500l-5-5z" fill="url(#gIcon)"/><path d="M.5 6.500h5v5" fill="#535353" stroke="#535353" stroke-width=".5"/></svg>
<svg style="left:1383.5px;top:919.0px" width="12" height="14" viewBox="0 0 12 14"><path d="M4 1.200h4M.8 3.200h10.400" stroke="#c8c8c8" stroke-width="1.300"/><path d="M1.800 5h8.400l-.8 8.500H2.600z" fill="url(#gIcon)"/><path d="M4.300 6.500v5.500M6 6.500v5.500M7.700 6.500v5.500" stroke="#555" stroke-width=".8"/></svg>
<div style="left:1424px;top:65px;width:1px;height:870px;background:#2b2b2b;"></div>
<div style="left:1425px;top:65px;width:1px;height:870px;background:#454545;"></div>
<svg style="left:291px;top:153px" width="616" height="692" viewBox="291 153 616 692">
<defs>
<clipPath id="cBody"><path d="M364 449A233 57 0 0 1 830 449C829.5 454.2 828.8 466.3 827.0 480.0C825.2 493.7 821.7 514.2 819.0 531.0C816.3 547.8 813.6 564.3 811.0 581.0C808.4 597.7 806.4 614.3 803.5 631.0C800.6 647.7 797.8 667.5 793.5 681.0C789.2 694.5 781.9 702.2 778.0 712.0C774.1 721.8 772.0 728.3 770.0 740.0C768.0 751.7 766.2 766.7 766.0 782.0C765.8 797.3 768.0 821.5 769.0 832.0C770.0 842.5 771.5 842.8 772.0 845.0L370 845C370.9 842.8 372.0 842.5 375.4 832.0C378.8 821.5 386.9 796.5 390.5 782.0C394.1 767.5 395.8 758.7 397.0 745.0C398.2 731.3 398.2 713.3 398.0 700.0C397.8 686.7 397.2 676.5 396.0 665.0C394.8 653.5 392.7 645.0 390.5 631.0C388.3 617.0 385.9 597.7 383.0 581.0C380.1 564.3 376.0 547.8 373.0 531.0C370.0 514.2 366.5 494.2 365.0 480.5C363.5 466.8 364.2 454.2 364.0 449.0Z"/></clipPath>
<clipPath id="cSkin"><path clip-rule="evenodd" d="M364 449A233 57 0 0 1 830 449C829.5 454.2 828.8 466.3 827.0 480.0C825.2 493.7 821.7 514.2 819.0 531.0C816.3 547.8 813.6 564.3 811.0 581.0C808.4 597.7 806.4 614.3 803.5 631.0C800.6 647.7 797.8 667.5 793.5 681.0C789.2 694.5 781.9 702.2 778.0 712.0C774.1 721.8 772.0 728.3 770.0 740.0C768.0 751.7 766.2 766.7 766.0 782.0C765.8 797.3 768.0 821.5 769.0 832.0C770.0 842.5 771.5 842.8 772.0 845.0L370 845C370.9 842.8 372.0 842.5 375.4 832.0C378.8 821.5 386.9 796.5 390.5 782.0C394.1 767.5 395.8 758.7 397.0 745.0C398.2 731.3 398.2 713.3 398.0 700.0C397.8 686.7 397.2 676.5 396.0 665.0C394.8 653.5 392.7 645.0 390.5 631.0C388.3 617.0 385.9 597.7 383.0 581.0C380.1 564.3 376.0 547.8 373.0 531.0C370.0 514.2 366.5 494.2 365.0 480.5C363.5 466.8 364.2 454.2 364.0 449.0ZM385.500 449A211.500 33.500 0 0 1 808.500 449A211.500 33.500 0 0 1 385.500 449Z"/></clipPath>
<clipPath id="cEarL"><path d="M336.0 478.5C332.7 478.8 328.8 480.4 326.0 482.0C323.2 483.6 321.2 484.7 319.0 488.0C316.8 491.3 314.2 496.8 313.0 502.0C311.8 507.2 311.6 512.7 311.5 519.0C311.4 525.3 311.9 532.7 312.5 540.0C313.1 547.3 314.1 555.6 315.4 562.6C316.6 569.6 318.3 576.0 320.0 582.0C321.7 588.0 323.8 593.3 325.6 598.5C327.4 603.7 329.3 608.3 331.0 613.0C332.7 617.7 334.1 620.6 336.0 626.7C337.9 632.8 340.4 643.3 342.3 649.7C344.2 656.1 345.6 661.5 347.4 665.0C349.2 668.5 351.1 669.7 353.0 671.0C354.9 672.3 356.7 672.8 359.0 672.8C361.3 672.8 364.4 671.9 367.0 671.0C369.6 670.1 371.5 669.1 374.4 667.7C377.3 666.3 380.0 664.7 384.6 662.6C389.2 660.5 398.8 672.1 402.0 655.0C405.2 637.9 406.0 585.0 404.0 560.0C402.0 535.0 396.7 516.3 390.0 505.0C383.3 493.7 369.8 495.5 364.0 492.0C358.2 488.5 358.0 486.0 355.0 484.0C352.0 482.0 349.2 480.9 346.0 480.0C342.8 479.1 339.3 478.2 336.0 478.5"/></clipPath>
<clipPath id="cEarR"><path d="M854.4 475.4C857.9 475.9 863.2 477.4 867.0 480.0C870.8 482.6 874.7 486.6 877.4 490.8C880.1 495.0 881.7 499.5 883.0 505.0C884.3 510.5 884.8 518.2 885.0 524.0C885.2 529.8 884.8 534.4 884.0 540.0C883.2 545.6 881.5 551.9 880.0 557.4C878.5 562.9 876.7 567.9 875.0 573.0C873.3 578.1 871.2 582.8 869.7 588.0C868.2 593.2 867.3 598.8 866.0 604.0C864.7 609.2 863.9 613.1 862.0 619.0C860.1 624.9 856.7 634.7 854.4 639.5C852.1 644.3 849.9 645.4 848.0 648.0C846.1 650.6 843.9 652.2 842.8 655.0C841.7 657.8 842.5 662.0 841.5 665.0C840.5 668.0 839.1 670.8 837.0 673.0C834.9 675.2 831.5 677.0 828.7 678.0C825.9 679.0 822.6 679.2 820.0 679.0C817.4 678.8 816.3 679.0 813.3 676.7C810.3 674.4 805.7 669.5 801.8 665.0C797.9 660.5 792.0 660.8 790.0 650.0C788.0 639.2 787.5 618.3 790.0 600.0C792.5 581.7 799.7 556.7 805.0 540.0C810.3 523.3 816.5 509.7 822.0 500.0C827.5 490.3 834.0 485.8 838.0 482.0C842.0 478.2 843.3 478.1 846.0 477.0C848.7 475.9 850.9 474.9 854.4 475.4"/></clipPath>
<filter id="fB1" x="-10%" y="-10%" width="120%" height="120%"><feGaussianBlur stdDeviation="1"/></filter>
<filter id="fB2" x="-10%" y="-20%" width="120%" height="140%"><feGaussianBlur stdDeviation="2.200"/></filter>
<filter id="fB4" x="-20%" y="-30%" width="140%" height="160%"><feGaussianBlur stdDeviation="4"/></filter>
<filter id="fB8" x="-30%" y="-40%" width="160%" height="180%"><feGaussianBlur stdDeviation="8"/></filter>
<filter id="fB16" x="-40%" y="-40%" width="180%" height="180%"><feGaussianBlur stdDeviation="16"/></filter>
<filter id="fB30" x="-150%" y="-120%" width="400%" height="340%"><feGaussianBlur stdDeviation="28"/></filter>
<filter id="fNoise" x="0" y="0" width="100%" height="100%"><feTurbulence type="fractalNoise" baseFrequency="0.9" numOctaves="1" seed="7"/><feColorMatrix type="matrix" values="0 0 0 0 0  0 0 0 0 0  0 0 0 0 0  2.6 2.6 0 0 -2.250"/></filter>
<filter id="fNoiseC" x="0" y="0" width="100%" height="100%"><feTurbulence type="fractalNoise" baseFrequency="0.36" numOctaves="1" seed="11"/><feColorMatrix type="matrix" values="0 0 0 0 0  0 0 0 0 0  0 0 0 0 0  3.2 3.2 0 0 -3.100"/></filter>
<filter id="fNoiseCW" x="0" y="0" width="100%" height="100%"><feTurbulence type="fractalNoise" baseFrequency="0.42" numOctaves="1" seed="4"/><feColorMatrix type="matrix" values="0 0 0 0 1  0 0 0 0 1  0 0 0 0 1  3.4 3.4 0 0 -3.550"/></filter>
<filter id="fNoiseW" x="0" y="0" width="100%" height="100%"><feTurbulence type="fractalNoise" baseFrequency="0.85" numOctaves="1" seed="23"/><feColorMatrix type="matrix" values="0 0 0 0 1  0 0 0 0 1  0 0 0 0 1  2.6 2.6 0 0 -2.250"/></filter>
<pattern id="pDots" width="3.100" height="3.100" patternUnits="userSpaceOnUse" patternTransform="rotate(28)"><circle cx="1" cy="1" r=".85" fill="#000"/><circle cx="2.550" cy="2.550" r=".55" fill="#fff" opacity=".8"/></pattern>
<linearGradient id="gBodyH" x1="364" y1="0" x2="830" y2="0" gradientUnits="userSpaceOnUse">
<stop offset="0" stop-color="#d0d0d0"/><stop offset=".08" stop-color="#bcbcbc"/><stop offset=".25" stop-color="#a6a6a6"/><stop offset=".36" stop-color="#8c8c8c"/><stop offset=".44" stop-color="#787878"/><stop offset=".5" stop-color="#707070"/><stop offset=".56" stop-color="#6e6e6e"/><stop offset=".63" stop-color="#6a6a6a"/><stop offset=".7" stop-color="#5c5c5c"/><stop offset=".8" stop-color="#464646"/><stop offset=".92" stop-color="#333"/><stop offset="1" stop-color="#2a2a2a"/></linearGradient>
<linearGradient id="gBodyV" x1="0" y1="449" x2="0" y2="845" gradientUnits="userSpaceOnUse">
<stop offset="0" stop-color="#000" stop-opacity=".25"/><stop offset=".2" stop-color="#000" stop-opacity=".12"/><stop offset=".45" stop-color="#000" stop-opacity="0"/><stop offset=".6" stop-color="#fff" stop-opacity=".08"/><stop offset=".8" stop-color="#fff" stop-opacity=".4"/><stop offset="1" stop-color="#fff" stop-opacity=".7"/></linearGradient>
<linearGradient id="gHole" x1="385" y1="0" x2="809" y2="0" gradientUnits="userSpaceOnUse">
<stop offset="0" stop-color="#050505"/><stop offset=".24" stop-color="#0c0c0c"/><stop offset=".4" stop-color="#242424"/><stop offset=".56" stop-color="#3c3c3c"/><stop offset=".74" stop-color="#333"/><stop offset=".9" stop-color="#1e1e1e"/><stop offset="1" stop-color="#141414"/></linearGradient>
<linearGradient id="gRimTop" x1="364" y1="0" x2="830" y2="0" gradientUnits="userSpaceOnUse"><stop offset="0" stop-color="#5a5a5a"/><stop offset=".1" stop-color="#8e8e8e"/><stop offset=".3" stop-color="#cacaca"/><stop offset=".6" stop-color="#d4d4d4"/><stop offset=".82" stop-color="#acacac"/><stop offset="1" stop-color="#747474"/></linearGradient>
<linearGradient id="gRimF" x1="364" y1="0" x2="830" y2="0" gradientUnits="userSpaceOnUse"><stop offset="0" stop-color="#4c4c4c"/><stop offset=".14" stop-color="#5a5a5a"/><stop offset=".32" stop-color="#a0a0a0"/><stop offset=".5" stop-color="#e2e2e2"/><stop offset=".66" stop-color="#c4c4c4"/><stop offset=".82" stop-color="#8e8e8e"/><stop offset="1" stop-color="#7a7a7a"/></linearGradient>
<linearGradient id="gShade" x1="364" y1="0" x2="830" y2="0" gradientUnits="userSpaceOnUse"><stop offset="0" stop-color="#181818" stop-opacity=".3"/><stop offset=".2" stop-color="#181818" stop-opacity=".4"/><stop offset=".45" stop-color="#181818" stop-opacity=".95"/><stop offset="1" stop-color="#101010" stop-opacity="1"/></linearGradient>
<linearGradient id="gEarL" x1="311" y1="560" x2="396" y2="548" gradientUnits="userSpaceOnUse"><stop offset="0" stop-color="#f0f0f0"/><stop offset=".1" stop-color="#dedede"/><stop offset=".32" stop-color="#cdcdcd"/><stop offset=".47" stop-color="#b2b2b2"/><stop offset=".55" stop-color="#9c9c9c"/><stop offset=".66" stop-color="#bababa"/><stop offset=".85" stop-color="#a8a8a8"/><stop offset="1" stop-color="#868686"/></linearGradient>
<linearGradient id="gEarR" x1="800" y1="562" x2="886" y2="578" gradientUnits="userSpaceOnUse"><stop offset="0" stop-color="#323232"/><stop offset=".28" stop-color="#444"/><stop offset=".48" stop-color="#565656"/><stop offset=".68" stop-color="#767676"/><stop offset=".86" stop-color="#707070"/><stop offset="1" stop-color="#545454"/></linearGradient>
</defs>
<!-- ears -->
<path d="M336.0 478.5C332.7 478.8 328.8 480.4 326.0 482.0C323.2 483.6 321.2 484.7 319.0 488.0C316.8 491.3 314.2 496.8 313.0 502.0C311.8 507.2 311.6 512.7 311.5 519.0C311.4 525.3 311.9 532.7 312.5 540.0C313.1 547.3 314.1 555.6 315.4 562.6C316.6 569.6 318.3 576.0 320.0 582.0C321.7 588.0 323.8 593.3 325.6 598.5C327.4 603.7 329.3 608.3 331.0 613.0C332.7 617.7 334.1 620.6 336.0 626.7C337.9 632.8 340.4 643.3 342.3 649.7C344.2 656.1 345.6 661.5 347.4 665.0C349.2 668.5 351.1 669.7 353.0 671.0C354.9 672.3 356.7 672.8 359.0 672.8C361.3 672.8 364.4 671.9 367.0 671.0C369.6 670.1 371.5 669.1 374.4 667.7C377.3 666.3 380.0 664.7 384.6 662.6C389.2 660.5 398.8 672.1 402.0 655.0C405.2 637.9 406.0 585.0 404.0 560.0C402.0 535.0 396.7 516.3 390.0 505.0C383.3 493.7 369.8 495.5 364.0 492.0C358.2 488.5 358.0 486.0 355.0 484.0C352.0 482.0 349.2 480.9 346.0 480.0C342.8 479.1 339.3 478.2 336.0 478.5" fill="url(#gEarL)"/>
<g clip-path="url(#cEarL)">
<ellipse cx="352" cy="545" rx="4" ry="46" fill="#6e6e6e" opacity=".32" filter="url(#fB4)" transform="rotate(-10 354 555)"/>
<ellipse cx="362" cy="678" rx="22" ry="7" fill="#505050" opacity=".6" filter="url(#fB4)"/>
<ellipse cx="338" cy="655" rx="6" ry="16" fill="#fff" opacity=".3" filter="url(#fB4)" transform="rotate(-20 338 655)"/>
<ellipse cx="330" cy="500" rx="14" ry="10" fill="#fff" opacity=".35" filter="url(#fB4)"/>
<ellipse cx="392" cy="600" rx="6" ry="70" fill="#444" opacity=".3" filter="url(#fB8)" transform="rotate(-8 392 600)"/>
</g>
<path d="M854.4 475.4C857.9 475.9 863.2 477.4 867.0 480.0C870.8 482.6 874.7 486.6 877.4 490.8C880.1 495.0 881.7 499.5 883.0 505.0C884.3 510.5 884.8 518.2 885.0 524.0C885.2 529.8 884.8 534.4 884.0 540.0C883.2 545.6 881.5 551.9 880.0 557.4C878.5 562.9 876.7 567.9 875.0 573.0C873.3 578.1 871.2 582.8 869.7 588.0C868.2 593.2 867.3 598.8 866.0 604.0C864.7 609.2 863.9 613.1 862.0 619.0C860.1 624.9 856.7 634.7 854.4 639.5C852.1 644.3 849.9 645.4 848.0 648.0C846.1 650.6 843.9 652.2 842.8 655.0C841.7 657.8 842.5 662.0 841.5 665.0C840.5 668.0 839.1 670.8 837.0 673.0C834.9 675.2 831.5 677.0 828.7 678.0C825.9 679.0 822.6 679.2 820.0 679.0C817.4 678.8 816.3 679.0 813.3 676.7C810.3 674.4 805.7 669.5 801.8 665.0C797.9 660.5 792.0 660.8 790.0 650.0C788.0 639.2 787.5 618.3 790.0 600.0C792.5 581.7 799.7 556.7 805.0 540.0C810.3 523.3 816.5 509.7 822.0 500.0C827.5 490.3 834.0 485.8 838.0 482.0C842.0 478.2 843.3 478.1 846.0 477.0C848.7 475.9 850.9 474.9 854.4 475.4" fill="url(#gEarR)"/>
<g clip-path="url(#cEarR)">
<ellipse cx="836" cy="545" rx="6" ry="50" fill="#2c2c2c" opacity=".45" filter="url(#fB4)" transform="rotate(12 836 545)"/>
<ellipse cx="826" cy="676" rx="26" ry="12" fill="#222" opacity=".6" filter="url(#fB8)"/>
<ellipse cx="846" cy="656" rx="8" ry="3" fill="#222" opacity=".5" filter="url(#fB2)" transform="rotate(-25 846 656)"/>
</g>
<g clip-path="url(#cEarR)" opacity=".07"><rect x="790" y="470" width="100" height="215" filter="url(#fNoiseW)"/></g>
<g clip-path="url(#cEarL)" opacity=".06"><rect x="308" y="470" width="100" height="215" filter="url(#fNoise)"/></g>
<!-- soft top of the rim (fades into white) -->
<ellipse cx="597" cy="449" rx="231" ry="55" fill="url(#gRimTop)" filter="url(#fB4)"/>
<!-- body -->
<path d="M364 449A233 57 0 0 1 830 449C829.5 454.2 828.8 466.3 827.0 480.0C825.2 493.7 821.7 514.2 819.0 531.0C816.3 547.8 813.6 564.3 811.0 581.0C808.4 597.7 806.4 614.3 803.5 631.0C800.6 647.7 797.8 667.5 793.5 681.0C789.2 694.5 781.9 702.2 778.0 712.0C774.1 721.8 772.0 728.3 770.0 740.0C768.0 751.7 766.2 766.7 766.0 782.0C765.8 797.3 768.0 821.5 769.0 832.0C770.0 842.5 771.5 842.8 772.0 845.0L370 845C370.9 842.8 372.0 842.5 375.4 832.0C378.8 821.5 386.9 796.5 390.5 782.0C394.1 767.5 395.8 758.7 397.0 745.0C398.2 731.3 398.2 713.3 398.0 700.0C397.8 686.7 397.2 676.5 396.0 665.0C394.8 653.5 392.7 645.0 390.5 631.0C388.3 617.0 385.9 597.7 383.0 581.0C380.1 564.3 376.0 547.8 373.0 531.0C370.0 514.2 366.5 494.2 365.0 480.5C363.5 466.8 364.2 454.2 364.0 449.0Z" fill="url(#gBodyH)"/>
<g clip-path="url(#cBody)">
<rect x="360" y="449" width="475" height="400" fill="url(#gBodyV)"/>
<ellipse cx="556" cy="635" rx="48" ry="100" fill="#000" opacity=".34" filter="url(#fB30)"/>
<ellipse cx="700" cy="830" rx="60" ry="60" fill="#000" opacity=".25" filter="url(#fB30)"/>
<ellipse cx="450" cy="800" rx="80" ry="75" fill="#fff" opacity=".5" filter="url(#fB30)"/>
<ellipse cx="640" cy="560" rx="60" ry="40" fill="#fff" opacity=".12" filter="url(#fB30)"/>
</g>
<!-- rim top surface (re-drawn sharp inside) -->
<path d="M367 449A230 51.500 0 0 1 827 449L809 449A212 34 0 0 0 385 449Z" fill="url(#gRimTop)" filter="url(#fB2)"/>
<!-- hole -->
<ellipse cx="597" cy="449" rx="212.500" ry="34.500" fill="url(#gHole)" filter="url(#fB1)"/>
<clipPath id="cHole"><ellipse cx="597" cy="449" rx="211" ry="33"/></clipPath>
<g clip-path="url(#cHole)" opacity=".22"><rect x="385" y="414" width="425" height="70" filter="url(#fNoiseW)"/></g>
<!-- front rim highlight band -->
<path d="M374 449A223 46 0 0 0 820 449" fill="none" stroke="url(#gRimF)" stroke-width="16" filter="url(#fB4)" clip-path="url(#cBody)"/>
<!-- shadow right under the band -->
<path d="M362 466A235 64 0 0 0 832 466" fill="none" stroke="url(#gShade)" stroke-width="18" opacity=".66" filter="url(#fB8)" clip-path="url(#cBody)"/>
<!-- texture -->
<g clip-path="url(#cSkin)"><rect x="360" y="455" width="475" height="395" fill="url(#pDots)" opacity=".16"/></g>
<g clip-path="url(#cSkin)" opacity=".24"><rect x="360" y="455" width="475" height="395" filter="url(#fNoiseC)"/></g>
<g clip-path="url(#cSkin)" opacity=".22"><rect x="360" y="390" width="475" height="460" filter="url(#fNoise)"/></g>
<g clip-path="url(#cSkin)" opacity=".2"><rect x="360" y="390" width="475" height="460" filter="url(#fNoiseW)"/></g>
<g clip-path="url(#cHole)"><rect x="385" y="414" width="425" height="70" fill="url(#pDots)" opacity=".2"/></g>
<g clip-path="url(#cHole)" opacity=".3"><rect x="385" y="414" width="425" height="70" filter="url(#fNoiseCW)"/></g>
</svg>
</div>
</body></html>
